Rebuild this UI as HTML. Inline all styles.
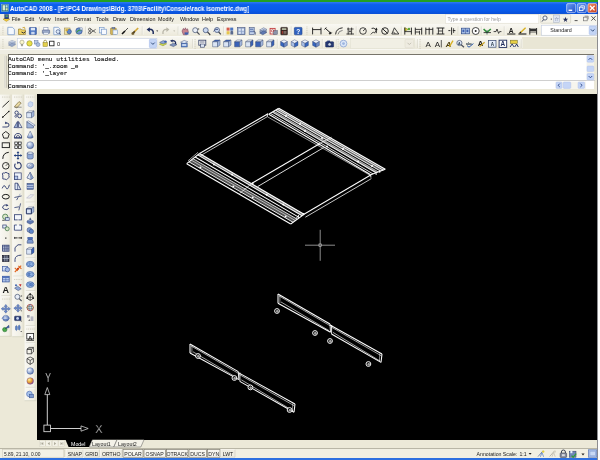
<!DOCTYPE html>
<html>
<head>
<meta charset="utf-8">
<title>AutoCAD 2008</title>
<style>
html,body{margin:0;padding:0;}
body{width:600px;height:460px;overflow:hidden;background:#fdfdfd;position:relative;font-family:"Liberation Sans",sans-serif;}
.abs{position:absolute;}
#green{left:0;top:0;width:598.2px;height:2.4px;background:#22a024;}
#win{left:0;top:2.3px;width:597.6px;height:455.5px;background:#ece9d8;}
#title{left:0;top:2px;width:597.6px;height:11.5px;background:linear-gradient(#2f7af2 0%,#0b60ee 22%,#095aea 70%,#0a4fd6 100%);}
#title .t{position:absolute;left:10px;top:1.5px;color:#fff;font-weight:bold;font-size:6.3px;line-height:9px;white-space:nowrap;transform-origin:0 0;transform:scaleX(0.973);}
#menu{left:0;top:13.5px;width:597.6px;height:10.5px;background:linear-gradient(90deg,#efede0 0%,#f0eee2 50%,#f6f5ee 100%);}
#menu span{position:absolute;top:1.6px;font-size:5.4px;line-height:7px;color:#111;white-space:nowrap;}
#tb1{left:0;top:24px;width:597.6px;height:12px;background:linear-gradient(#f9f8f3,#ece9da);border-bottom:0.7px solid #fbfaf6;}
#tb2bg{left:0;top:36.7px;width:597.6px;height:12.2px;background:#e9e6d5;}
#tb2{left:0;top:36.7px;width:522px;height:12.4px;background:linear-gradient(#f8f7f1,#ebe8d9);}
#tb3{left:0;top:48.9px;width:597.6px;height:5.2px;background:#efede2;border-top:0.8px solid #f8f7f2;box-sizing:border-box;}
#cmd{left:8px;top:54px;width:586px;height:35.2px;background:#fff;border-top:0.9px solid #77746a;border-left:0.9px solid #77746a;box-sizing:border-box;}
#cmd .l{-webkit-text-stroke:0.12px #111;position:absolute;left:-0.6px;font-family:"Liberation Mono",monospace;font-size:6.2px;line-height:6.7px;color:#111;white-space:pre;}
#draw{left:37px;top:94px;width:560px;height:346px;background:#000;}
#left{left:0;top:94px;width:37.4px;height:354px;background:#ece9d8;}
#tabs{left:37px;top:440px;width:560px;height:8.2px;background:#ece9d8;}
#status{left:0;top:448.2px;width:597.6px;height:9.6px;background:#f1efe2;border-top:0.6px solid #b9b6a6;box-sizing:border-box;}
#task{left:0;top:457.8px;width:597.4px;height:2.2px;background:#2d6fe0;}
#redge{left:597.2px;top:2.3px;width:1.1px;height:457.7px;background:#8d8d90;}

#iconsvg,#drawsvg,#title .t,#menu,#cmd .l{will-change:transform;}
#redge2{left:597.1px;top:2px;width:1.2px;height:11.5px;background:#1b3fa8;}

</style>
</head>
<body>
<div id="green" class="abs"></div>
<div id="win" class="abs"></div>
<div id="title" class="abs"><div class="t">AutoCAD 2008 - [P:\PC4 Drawings\Bldg. 3703\Facility\Console\rack isometric.dwg]</div></div>
<div id="menu" class="abs">
<span style="left:11.8px">File</span><span style="left:25px">Edit</span><span style="left:39px">View</span><span style="left:55px">Insert</span><span style="left:74px">Format</span><span style="left:96px">Tools</span><span style="left:113px">Draw</span><span style="left:130px">Dimension</span><span style="left:158px">Modify</span><span style="left:180px">Window</span><span style="left:202px">Help</span><span style="left:217px">Express</span>
</div>
<div id="tb1" class="abs"></div>
<div id="tb2bg" class="abs"></div>
<div id="tb2" class="abs"></div>
<div id="tb3" class="abs"></div>
<div id="cmd" class="abs">
<div class="l" style="top:1.9px">AutoCAD menu utilities loaded.</div>
<div class="l" style="top:8.7px">Command: '_.zoom _e</div>
<div class="l" style="top:16.2px">Command: '_layer</div>
<div class="abs" style="left:0;top:25.4px;width:586px;height:0.7px;background:#cfcfcf"></div>
<div class="l" style="top:28.5px">Command:</div>
</div>
<div id="left" class="abs"></div>
<div id="draw" class="abs"></div>
<div id="tabs" class="abs"></div>
<div id="status" class="abs"></div>
<div id="task" class="abs"></div>
<div id="redge" class="abs"></div>
<div id="redge2" class="abs"></div>

<svg id="drawsvg" class="abs" width="600" height="460" viewBox="0 0 600 460" style="left:0;top:0">
<line x1="199.5" y1="153.5" x2="268.0" y2="113.7" stroke="#fff" stroke-width="1.01" stroke-opacity="1"/>
<line x1="200.6" y1="155.6" x2="267.3" y2="116.7" stroke="#fff" stroke-width="0.9" stroke-opacity="0.85"/>
<line x1="304.0" y1="214.3" x2="370.7" y2="175.0" stroke="#fff" stroke-width="1.01" stroke-opacity="1"/>
<line x1="305.4" y1="217.2" x2="371.4" y2="178.6" stroke="#fff" stroke-width="0.9" stroke-opacity="0.85"/>
<line x1="267.3" y1="116.7" x2="370.7" y2="175.6" stroke="#fff" stroke-width="0.78" stroke-opacity="0.75"/>
<line x1="252.0" y1="183.3" x2="318.7" y2="144.2" stroke="#fff" stroke-width="1.01" stroke-opacity="1"/>
<line x1="257.6" y1="186.6" x2="323.6" y2="147.6" stroke="#fff" stroke-width="0.95" stroke-opacity="0.9"/>
<line x1="252.0" y1="183.3" x2="239.6" y2="193.4" stroke="#fff" stroke-width="0.78" stroke-opacity="0.8"/>
<line x1="318.7" y1="144.2" x2="331.6" y2="137.2" stroke="#fff" stroke-width="0.78" stroke-opacity="0.8"/>
<polygon points="199.5,153.5 304.0,214.3 302.1,215.7 197.7,154.9" fill="#fff" fill-opacity="0.5"/>
<polygon points="193.0,158.7 297.2,219.2 293.1,222.3 189.0,161.9" fill="#fff" fill-opacity="0.32"/>
<line x1="199.5" y1="153.5" x2="304.0" y2="214.3" stroke="#fff" stroke-width="1.12" stroke-opacity="1"/>
<line x1="197.7" y1="154.9" x2="302.1" y2="215.7" stroke="#fff" stroke-width="1.01" stroke-opacity="0.95"/>
<line x1="195.1" y1="157.0" x2="299.5" y2="217.6" stroke="#fff" stroke-width="1.06" stroke-opacity="1"/>
<line x1="193.0" y1="158.7" x2="297.2" y2="219.2" stroke="#fff" stroke-width="0.9" stroke-opacity="0.9"/>
<line x1="191.2" y1="160.1" x2="295.4" y2="220.6" stroke="#fff" stroke-width="0.78" stroke-opacity="0.75"/>
<line x1="189.0" y1="161.9" x2="293.1" y2="222.3" stroke="#fff" stroke-width="0.95" stroke-opacity="0.95"/>
<line x1="186.7" y1="163.7" x2="290.7" y2="224.0" stroke="#fff" stroke-width="1.12" stroke-opacity="1"/>
<line x1="199.5" y1="153.5" x2="186.7" y2="163.7" stroke="#fff" stroke-width="1.01" stroke-opacity="1"/>
<line x1="304.0" y1="214.3" x2="290.7" y2="224.0" stroke="#fff" stroke-width="1.01" stroke-opacity="1"/>
<line x1="198.0" y1="152.3" x2="188.0" y2="160.8" stroke="#fff" stroke-width="0.78" stroke-opacity="0.8"/>
<line x1="296.0" y1="218.7" x2="298.6" y2="215.2" stroke="#fff" stroke-width="0.9" stroke-opacity="1"/>
<line x1="298.6" y1="215.2" x2="298.2" y2="219.0" stroke="#fff" stroke-width="0.78" stroke-opacity="1"/>
<circle cx="214" cy="164.4" r="1.0" fill="#fff"/>
<circle cx="232" cy="174.6" r="1.0" fill="#fff"/>
<circle cx="266.7" cy="194.8" r="1.0" fill="#fff"/>
<circle cx="283.3" cy="204.6" r="1.0" fill="#fff"/>
<circle cx="200.4" cy="167.6" r="1.0" fill="#fff"/>
<circle cx="233.3" cy="186.4" r="1.0" fill="#fff"/>
<circle cx="252.7" cy="197.4" r="1.0" fill="#fff"/>
<circle cx="285.6" cy="216.4" r="1.0" fill="#fff"/>
<polygon points="272.4,112.1 376.1,172.8 378.3,171.9 273.9,111.2" fill="#fff" fill-opacity="0.5"/>
<polygon points="275.5,110.2 380.6,171.1 385.3,169.3 278.7,108.3" fill="#fff" fill-opacity="0.36"/>
<line x1="268.7" y1="114.3" x2="370.7" y2="174.8" stroke="#fff" stroke-width="1.12" stroke-opacity="1"/>
<line x1="270.3" y1="113.3" x2="373.0" y2="173.9" stroke="#fff" stroke-width="0.95" stroke-opacity="0.9"/>
<line x1="272.4" y1="112.1" x2="376.1" y2="172.8" stroke="#fff" stroke-width="1.01" stroke-opacity="0.95"/>
<line x1="273.9" y1="111.2" x2="378.3" y2="171.9" stroke="#fff" stroke-width="0.78" stroke-opacity="0.8"/>
<line x1="275.5" y1="110.2" x2="380.6" y2="171.1" stroke="#fff" stroke-width="1.01" stroke-opacity="0.95"/>
<line x1="277.3" y1="109.1" x2="383.3" y2="170.1" stroke="#fff" stroke-width="1.01" stroke-opacity="0.95"/>
<line x1="278.7" y1="108.3" x2="385.3" y2="169.3" stroke="#fff" stroke-width="1.12" stroke-opacity="1"/>
<line x1="268.7" y1="114.3" x2="278.7" y2="108.3" stroke="#fff" stroke-width="1.01" stroke-opacity="1"/>
<line x1="370.7" y1="174.8" x2="385.3" y2="169.3" stroke="#fff" stroke-width="1.01" stroke-opacity="1"/>
<line x1="267.3" y1="113.7" x2="267.3" y2="116.7" stroke="#fff" stroke-width="0.9" stroke-opacity="1"/>
<line x1="370.7" y1="175.0" x2="370.9" y2="177.6" stroke="#fff" stroke-width="0.9" stroke-opacity="1"/>
<line x1="376.0" y1="172.4" x2="376.2" y2="175.0" stroke="#fff" stroke-width="0.9" stroke-opacity="1"/>
<line x1="379.5" y1="170.6" x2="379.8" y2="173.0" stroke="#fff" stroke-width="0.78" stroke-opacity="1"/>
<circle cx="286" cy="116" r="1.0" fill="#fff"/>
<circle cx="305" cy="131" r="1.0" fill="#fff"/>
<circle cx="322" cy="138" r="1.0" fill="#fff"/>
<circle cx="343" cy="149" r="1.0" fill="#fff"/>
<circle cx="358" cy="161.5" r="1.0" fill="#fff"/>
<circle cx="372" cy="166" r="1.0" fill="#fff"/>
<circle cx="327" cy="146.5" r="1.0" fill="#fff"/>
<circle cx="300" cy="124" r="1.0" fill="#fff"/>
<circle cx="252.5" cy="183.5" r="1.1" fill="#fff" fill-opacity="0.9"/>
<circle cx="319" cy="144.4" r="1.1" fill="#fff" fill-opacity="0.9"/>
<circle cx="303.5" cy="214.2" r="1.1" fill="#fff" fill-opacity="0.9"/>
<line x1="278.0" y1="294.0" x2="330.0" y2="324.0" stroke="#fff" stroke-width="1.06" stroke-opacity="1"/>
<line x1="330.0" y1="325.0" x2="382.0" y2="354.0" stroke="#fff" stroke-width="1.06" stroke-opacity="1"/>
<line x1="279.0" y1="295.9" x2="330.0" y2="325.7" stroke="#fff" stroke-width="0.78" stroke-opacity="0.8"/>
<line x1="331.0" y1="326.9" x2="381.5" y2="355.9" stroke="#fff" stroke-width="0.78" stroke-opacity="0.8"/>
<line x1="281.0" y1="302.0" x2="329.0" y2="330.6" stroke="#fff" stroke-width="0.78" stroke-opacity="0.8"/>
<line x1="333.0" y1="332.4" x2="380.0" y2="361.0" stroke="#fff" stroke-width="0.78" stroke-opacity="0.8"/>
<line x1="278.0" y1="303.2" x2="330.5" y2="332.2" stroke="#fff" stroke-width="1.01" stroke-opacity="1"/>
<line x1="331.5" y1="334.0" x2="381.0" y2="362.4" stroke="#fff" stroke-width="1.01" stroke-opacity="1"/>
<line x1="278.0" y1="294.0" x2="278.0" y2="303.2" stroke="#fff" stroke-width="1.06" stroke-opacity="1"/>
<line x1="279.9" y1="295.5" x2="279.9" y2="303.0" stroke="#fff" stroke-width="0.67" stroke-opacity="0.8"/>
<line x1="382.0" y1="354.0" x2="381.0" y2="362.4" stroke="#fff" stroke-width="1.06" stroke-opacity="1"/>
<line x1="379.8" y1="353.4" x2="379.4" y2="361.2" stroke="#fff" stroke-width="0.67" stroke-opacity="0.8"/>
<line x1="330.0" y1="324.0" x2="330.5" y2="332.2" stroke="#fff" stroke-width="0.9" stroke-opacity="1"/>
<line x1="331.6" y1="325.0" x2="331.6" y2="334.0" stroke="#fff" stroke-width="0.9" stroke-opacity="1"/>
<line x1="190.0" y1="344.0" x2="238.3" y2="371.6" stroke="#fff" stroke-width="1.06" stroke-opacity="1"/>
<line x1="238.3" y1="372.6" x2="295.0" y2="404.0" stroke="#fff" stroke-width="1.06" stroke-opacity="1"/>
<line x1="191.0" y1="345.9" x2="238.3" y2="373.3" stroke="#fff" stroke-width="0.78" stroke-opacity="0.8"/>
<line x1="239.3" y1="374.5" x2="294.5" y2="405.9" stroke="#fff" stroke-width="0.78" stroke-opacity="0.8"/>
<line x1="193.0" y1="351.8" x2="237.3" y2="378.0" stroke="#fff" stroke-width="0.78" stroke-opacity="0.8"/>
<line x1="241.3" y1="379.8" x2="293.0" y2="410.8" stroke="#fff" stroke-width="0.78" stroke-opacity="0.8"/>
<line x1="190.0" y1="353.0" x2="238.8" y2="379.6" stroke="#fff" stroke-width="1.01" stroke-opacity="1"/>
<line x1="239.8" y1="381.4" x2="294.0" y2="412.2" stroke="#fff" stroke-width="1.01" stroke-opacity="1"/>
<line x1="190.0" y1="344.0" x2="190.0" y2="353.0" stroke="#fff" stroke-width="1.06" stroke-opacity="1"/>
<line x1="191.9" y1="345.5" x2="191.9" y2="352.8" stroke="#fff" stroke-width="0.67" stroke-opacity="0.8"/>
<line x1="295.0" y1="404.0" x2="294.0" y2="412.2" stroke="#fff" stroke-width="1.06" stroke-opacity="1"/>
<line x1="292.8" y1="403.4" x2="292.4" y2="411.0" stroke="#fff" stroke-width="0.67" stroke-opacity="0.8"/>
<line x1="238.3" y1="371.6" x2="238.8" y2="379.6" stroke="#fff" stroke-width="0.9" stroke-opacity="1"/>
<line x1="239.9" y1="372.6" x2="239.9" y2="381.4" stroke="#fff" stroke-width="0.9" stroke-opacity="1"/>
<circle cx="277" cy="311" r="2.4" fill="#000" stroke="#fff" stroke-width="0.95"/><circle cx="277.3" cy="311.3" r="1.0" fill="#888" stroke="#fff" stroke-width="0.5" stroke-opacity="0.9"/>
<circle cx="315" cy="333" r="2.4" fill="#000" stroke="#fff" stroke-width="0.95"/><circle cx="315.3" cy="333.3" r="1.0" fill="#888" stroke="#fff" stroke-width="0.5" stroke-opacity="0.9"/>
<circle cx="330" cy="341" r="2.4" fill="#000" stroke="#fff" stroke-width="0.95"/><circle cx="330.3" cy="341.3" r="1.0" fill="#888" stroke="#fff" stroke-width="0.5" stroke-opacity="0.9"/>
<circle cx="368.4" cy="364" r="2.4" fill="#000" stroke="#fff" stroke-width="0.95"/><circle cx="368.7" cy="364.3" r="1.0" fill="#888" stroke="#fff" stroke-width="0.5" stroke-opacity="0.9"/>
<circle cx="198" cy="356" r="2.4" fill="#000" stroke="#fff" stroke-width="0.95"/><circle cx="198.3" cy="356.3" r="1.0" fill="#888" stroke="#fff" stroke-width="0.5" stroke-opacity="0.9"/>
<circle cx="234.4" cy="378" r="2.4" fill="#000" stroke="#fff" stroke-width="0.95"/><circle cx="234.70000000000002" cy="378.3" r="1.0" fill="#888" stroke="#fff" stroke-width="0.5" stroke-opacity="0.9"/>
<circle cx="250.4" cy="387.4" r="2.4" fill="#000" stroke="#fff" stroke-width="0.95"/><circle cx="250.70000000000002" cy="387.7" r="1.0" fill="#888" stroke="#fff" stroke-width="0.5" stroke-opacity="0.9"/>
<circle cx="289.6" cy="410" r="2.4" fill="#000" stroke="#fff" stroke-width="0.95"/><circle cx="289.90000000000003" cy="410.3" r="1.0" fill="#888" stroke="#fff" stroke-width="0.5" stroke-opacity="0.9"/>
<line x1="305.0" y1="245.2" x2="335.0" y2="245.2" stroke="#d0d0d0" stroke-width="0.67" stroke-opacity="1"/>
<line x1="320.2" y1="229.8" x2="320.2" y2="260.8" stroke="#d0d0d0" stroke-width="0.67" stroke-opacity="1"/>
<rect x="318.9" y="243.9" width="2.6" height="2.6" fill="#666" stroke="#ccc" stroke-width="0.5"/>
<rect x="43.9" y="425.1" width="6.6" height="6.6" fill="none" stroke="#e8e8e8" stroke-width="0.8"/>
<line x1="47.3" y1="425.0" x2="47.3" y2="394.6" stroke="#e8e8e8" stroke-width="0.9" stroke-opacity="1"/>
<polygon points="47.3,387.5 44.8,394.6 49.8,394.6" fill="none" stroke="#e8e8e8" stroke-width="0.7"/>
<line x1="50.6" y1="428.5" x2="81.0" y2="428.5" stroke="#e8e8e8" stroke-width="0.9" stroke-opacity="1"/>
<polygon points="88.2,428.5 81,425.9 81,431.2" fill="none" stroke="#e8e8e8" stroke-width="0.7"/>
<text transform="translate(48.2,381.6) scale(0.72,1)" x="0" y="0" font-family="Liberation Sans, sans-serif" font-size="12" fill="#e8e8e8" text-anchor="middle" stroke="#000" stroke-width="0.3">Y</text>
<text x="98.8" y="432.8" font-family="Liberation Sans, sans-serif" font-size="11" fill="#e8e8e8" text-anchor="middle" stroke="#000" stroke-width="0.4">X</text>
</svg>
<svg id="iconsvg" class="abs" width="600" height="460" viewBox="0 0 600 460" style="left:0;top:0">
<rect x="1.6" y="4.2" width="7.0" height="7.4" fill="#2a6a7c" stroke="#9fd0d8" stroke-width="0.5" rx="0" fill-opacity="1"/>
<rect x="2.6" y="5.2" width="2.4" height="5.2" fill="#d8ecd0" rx="0" fill-opacity="1"/>
<rect x="5.6" y="5.2" width="2.0" height="2.4" fill="#bfe0e8" rx="0" fill-opacity="1"/>
<rect x="5.6" y="8.2" width="2.0" height="2.2" fill="#e8f0a8" rx="0" fill-opacity="1"/>
<defs><linearGradient id="gb" x1="0" y1="0" x2="1" y2="1"><stop offset="0" stop-color="#6c9cf4"/><stop offset="1" stop-color="#1f50c8"/></linearGradient><linearGradient id="gr" x1="0" y1="0" x2="1" y2="1"><stop offset="0" stop-color="#f0906a"/><stop offset="1" stop-color="#c63a18"/></linearGradient></defs>
<rect x="566.6" y="3.6" width="9.0" height="9.0" fill="url(#gb)" stroke="#dfe8fb" stroke-width="0.6" rx="1.4" fill-opacity="1"/>
<rect x="577.2" y="3.6" width="9.0" height="9.0" fill="url(#gb)" stroke="#dfe8fb" stroke-width="0.6" rx="1.4" fill-opacity="1"/>
<rect x="587.8" y="3.6" width="9.0" height="9.0" fill="url(#gr)" stroke="#fbe4dc" stroke-width="0.6" rx="1.4" fill-opacity="1"/>
<rect x="568.6" y="9.6" width="3.6" height="1.4" fill="#fff" rx="0" fill-opacity="1"/>
<rect x="579.4" y="7.2" width="3.6" height="3.4" fill="none" stroke="#fff" stroke-width="0.8" rx="0" fill-opacity="1"/>
<path d="M580.8,6.8 v-1 h3.6 v3.4 h-1" fill="none" stroke="#fff" stroke-width="0.8" stroke-linecap="butt" stroke-linejoin="round" opacity="1"/>
<line x1="590.0" y1="5.8" x2="594.6" y2="10.4" stroke="#fff" stroke-width="1.3" stroke-opacity="1"/>
<line x1="594.6" y1="5.8" x2="590.0" y2="10.4" stroke="#fff" stroke-width="1.3" stroke-opacity="1"/>
<path d="M3,19.2 l3.4,-1.6 l3.4,1.6 l-3.4,2.2z" fill="#f0c83c" stroke="#a07c10" stroke-width="0.4" stroke-linecap="butt" stroke-linejoin="round" opacity="1"/>
<rect x="4.8" y="14.6" width="3.8" height="4.2" fill="#2b4a8e" stroke="#15244a" stroke-width="0.4" rx="0" fill-opacity="1"/>
<rect x="5.6" y="15.4" width="2.2" height="1.4" fill="#6fb24c" rx="0" fill-opacity="1"/>
<rect x="445.4" y="14.4" width="93.4" height="8.8" fill="#fff" stroke="#dddacc" stroke-width="0.5" rx="0" fill-opacity="1"/>
<text x="447.4" y="21.0" font-family="Liberation Sans, sans-serif" font-size="5.0" font-weight="normal" font-style="normal" fill="#9a9a9a" text-anchor="start">Type a question for help</text>
<rect x="540.6" y="14.4" width="30.0" height="8.8" fill="#f4f2e8" stroke="#c9c6b6" stroke-width="0.5" rx="1" fill-opacity="1"/>
<circle cx="545.0" cy="18.0" r="2.1" fill="#f6f8fb" stroke="#3c4660" stroke-width="0.8" fill-opacity="1"/>
<line x1="543.6" y1="19.6" x2="542.0" y2="21.6" stroke="#3c4660" stroke-width="1.0" stroke-opacity="1"/>
<rect x="550.8" y="18.6" width="1.0" height="1.0" fill="#333" rx="0" fill-opacity="1"/>
<rect x="553.6" y="15.0" width="6.2" height="7.4" fill="#dfe5f0" stroke="#9aa4ba" stroke-width="0.4" rx="0" fill-opacity="1"/>
<text x="556.7" y="21.0" font-family="DejaVu Sans, sans-serif" font-size="5.5" font-weight="bold" font-style="normal" fill="#3a4a7a" text-anchor="middle">☆</text>
<text x="565.6" y="21.6" font-family="DejaVu Sans, sans-serif" font-size="7.2" font-weight="normal" font-style="normal" fill="#27305a" text-anchor="middle">★</text>
<line x1="574.6" y1="20.6" x2="577.6" y2="20.6" stroke="#444" stroke-width="0.9" stroke-opacity="1"/>
<rect x="583.4" y="17.2" width="3.8" height="3.6" fill="none" stroke="#777" stroke-width="0.7" rx="0" fill-opacity="1"/>
<line x1="584.6" y1="16.2" x2="588.2" y2="16.2" stroke="#777" stroke-width="0.8" stroke-opacity="1"/>
<line x1="588.2" y1="16.2" x2="588.2" y2="19.4" stroke="#777" stroke-width="0.7" stroke-opacity="1"/>
<line x1="591.4" y1="16.2" x2="595.6" y2="20.6" stroke="#444" stroke-width="0.9" stroke-opacity="1"/>
<line x1="595.6" y1="16.2" x2="591.4" y2="20.6" stroke="#444" stroke-width="0.9" stroke-opacity="1"/>
<rect x="2.5" y="26.5" width="0.9" height="0.9" fill="#c9c6b6" rx="0" fill-opacity="1"/><rect x="2.5" y="28.3" width="0.9" height="0.9" fill="#c9c6b6" rx="0" fill-opacity="1"/><rect x="2.5" y="30.1" width="0.9" height="0.9" fill="#c9c6b6" rx="0" fill-opacity="1"/><rect x="2.5" y="31.9" width="0.9" height="0.9" fill="#c9c6b6" rx="0" fill-opacity="1"/><rect x="2.5" y="33.7" width="0.9" height="0.9" fill="#c9c6b6" rx="0" fill-opacity="1"/>
<path d="M7.8,27.3 h4.6 l2,2 v5.4 h-6.6z" fill="#f4f8fd" stroke="#6d8fc4" stroke-width="0.7" stroke-linecap="butt" stroke-linejoin="round" opacity="1"/>
<path d="M18.5,29.0 h2.5 l0.8,0.9 h3.6 v4.6 h-6.9z" fill="#f0d264" stroke="#8a7320" stroke-width="0.6" stroke-linecap="butt" stroke-linejoin="round" opacity="1"/>
<path d="M21.5,32.0 q2.5,2.5 4,-0.5" fill="none" stroke="#333" stroke-width="1.0" stroke-linecap="butt" stroke-linejoin="round" opacity="1"/>
<path d="M22.5,27.8 l2,-0.5 l0.5,2" fill="none" stroke="#c89a20" stroke-width="0.8" stroke-linecap="butt" stroke-linejoin="round" opacity="1"/>
<rect x="29.4" y="27.5" width="7.0" height="7.0" fill="#4a74c0" stroke="#2b4a8e" stroke-width="0.6" rx="0.5" fill-opacity="1"/>
<rect x="30.8" y="27.8" width="4.2" height="2.6" fill="#dfe8f6" rx="0" fill-opacity="1"/>
<rect x="31.2" y="31.8" width="3.4" height="2.6" fill="#c9d6ee" rx="0" fill-opacity="1"/>
<line x1="39.3" y1="26.5" x2="39.3" y2="34.8" stroke="#c5c2b2" stroke-width="0.6" stroke-opacity="1"/><line x1="39.9" y1="26.5" x2="39.9" y2="34.8" stroke="#fff" stroke-width="0.6" stroke-opacity="1"/>
<rect x="43.8" y="27.6" width="4.2" height="2.6" fill="#fff" stroke="#6f7fa6" stroke-width="0.5" rx="0" fill-opacity="1"/>
<rect x="42.4" y="30.0" width="7.2" height="3.4" fill="#9aa9c8" stroke="#4d5d86" stroke-width="0.6" rx="0.6" fill-opacity="1"/>
<rect x="43.6" y="32.4" width="4.8" height="2.0" fill="#e8edf7" stroke="#6f7fa6" stroke-width="0.4" rx="0" fill-opacity="1"/>
<path d="M53.8,27.3 h4.4 l1.8,1.8 v5.6 h-6.2z" fill="#f4f8fd" stroke="#6d8fc4" stroke-width="0.7" stroke-linecap="butt" stroke-linejoin="round" opacity="1"/>
<circle cx="58.0" cy="31.6" r="1.9" fill="#dce9f8" stroke="#4a5e8c" stroke-width="0.7" fill-opacity="1"/>
<line x1="59.2" y1="33.0" x2="60.8" y2="34.8" stroke="#4a5e8c" stroke-width="1" stroke-opacity="1"/>
<rect x="64.6" y="28.0" width="5.4" height="6.2" fill="#f2e3a1" stroke="#8c7a3a" stroke-width="0.5" rx="0" fill-opacity="1"/>
<circle cx="69.2" cy="31.6" r="2.2" fill="#5f86c9" stroke="#2d4a8a" stroke-width="0.6" fill-opacity="1"/>
<rect x="65.6" y="29.2" width="2.2" height="1.8" fill="#d0a73a" rx="0" fill-opacity="1"/>
<circle cx="79.0" cy="31.0" r="3.2" fill="#6c93cf" stroke="#2d4a8a" stroke-width="0.6" fill-opacity="1"/>
<path d="M76.5,32.5 q2,-3 5,-2.5" fill="none" stroke="#3e9a4a" stroke-width="1.2" stroke-linecap="butt" stroke-linejoin="round" opacity="1"/>
<circle cx="81.2" cy="28.8" r="1.3" fill="#dfe8f6" stroke="#55668e" stroke-width="0.4" fill-opacity="1"/>
<line x1="85.6" y1="26.5" x2="85.6" y2="34.8" stroke="#c5c2b2" stroke-width="0.6" stroke-opacity="1"/><line x1="86.2" y1="26.5" x2="86.2" y2="34.8" stroke="#fff" stroke-width="0.6" stroke-opacity="1"/>
<line x1="90.6" y1="29.0" x2="95.6" y2="32.6" stroke="#444" stroke-width="0.8" stroke-opacity="1"/>
<line x1="90.6" y1="32.8" x2="95.6" y2="29.4" stroke="#444" stroke-width="0.8" stroke-opacity="1"/>
<circle cx="89.7" cy="29.4" r="1.2" fill="none" stroke="#333" stroke-width="0.7" fill-opacity="1"/>
<circle cx="89.7" cy="32.6" r="1.2" fill="none" stroke="#333" stroke-width="0.7" fill-opacity="1"/>
<rect x="99.5" y="27.5" width="4.6" height="5.4" fill="#eef4fc" stroke="#6d8fc4" stroke-width="0.6" rx="0" fill-opacity="1"/>
<rect x="101.6" y="29.2" width="4.8" height="5.4" fill="#f6f9fe" stroke="#6d8fc4" stroke-width="0.6" rx="0" fill-opacity="1"/>
<rect x="110.6" y="28.0" width="5.6" height="6.4" fill="#d9b95c" stroke="#8a6e1e" stroke-width="0.5" rx="0.6" fill-opacity="1"/>
<rect x="112.0" y="27.3" width="2.8" height="1.6" fill="#8896b5" stroke="#4d5d86" stroke-width="0.4" rx="0" fill-opacity="1"/>
<rect x="113.0" y="30.0" width="4.4" height="4.6" fill="#eef4fc" stroke="#6d8fc4" stroke-width="0.5" rx="0" fill-opacity="1"/>
<line x1="122.0" y1="34.0" x2="125.0" y2="31.0" stroke="#111" stroke-width="1.6" stroke-opacity="1"/>
<line x1="125.0" y1="31.0" x2="128.0" y2="28.0" stroke="#555" stroke-width="1.0" stroke-opacity="1"/>
<line x1="132.2" y1="34.0" x2="135.0" y2="31.2" stroke="#4a3a1a" stroke-width="1.8" stroke-opacity="1"/>
<line x1="134.8" y1="31.4" x2="138.2" y2="28.0" stroke="#d3a93c" stroke-width="1.6" stroke-opacity="1"/>
<rect x="131.6" y="32.6" width="2.6" height="2.0" fill="#6e5a2a" rx="0" fill-opacity="1"/>
<line x1="142.3" y1="26.5" x2="142.3" y2="34.8" stroke="#c5c2b2" stroke-width="0.6" stroke-opacity="1"/><line x1="142.9" y1="26.5" x2="142.9" y2="34.8" stroke="#fff" stroke-width="0.6" stroke-opacity="1"/>
<path d="M153.2,34.0 q0.8,-5 -4.4,-4.6" fill="none" stroke="#1c2a5c" stroke-width="1.5" stroke-linecap="butt" stroke-linejoin="round" opacity="1"/>
<path d="M146.6,29.6 l3.2,-2.4 v4.8z" fill="#1c2a5c" opacity="1"/>
<path d="M156.2,30.6 h2 l-1,1.2z" fill="#222" opacity="1"/>
<path d="M163,34.0 q-0.8,-5 4.2,-4.6" fill="none" stroke="#b9b6a8" stroke-width="1.3" stroke-linecap="butt" stroke-linejoin="round" opacity="1"/>
<path d="M169.4,29.6 l-3,-2.3 v4.6z" fill="#b9b6a8" opacity="1"/>
<path d="M173.2,30.6 h2 l-1,1.2z" fill="#b5b2a4" opacity="1"/>
<line x1="178.2" y1="26.5" x2="178.2" y2="34.8" stroke="#c5c2b2" stroke-width="0.6" stroke-opacity="1"/><line x1="178.8" y1="26.5" x2="178.8" y2="34.8" stroke="#fff" stroke-width="0.6" stroke-opacity="1"/>
<path d="M182,31.0 l1.4,-2.6 l1,1.4 l1,-2 l1,2 l1.2,-1 l0.8,3.4 l-1.6,2.6 h-3.4z" fill="#c9858e" stroke="#6a3550" stroke-width="0.5" stroke-linecap="butt" stroke-linejoin="round" opacity="1"/>
<rect x="184.6" y="32.4" width="3.8" height="2.2" fill="#3e5fae" rx="0" fill-opacity="1"/>
<circle cx="195.2" cy="30.2" r="2.5" fill="#e9eef6" stroke="#56627e" stroke-width="0.8" fill-opacity="1"/>
<line x1="197.0" y1="32.0" x2="199.6" y2="34.6" stroke="#4c4f5a" stroke-width="1.2" stroke-opacity="1"/>
<text x="197.2" y="30.4" font-family="Liberation Sans, sans-serif" font-size="4" font-weight="normal" font-style="normal" fill="#333" text-anchor="start">±</text>
<circle cx="205.7" cy="30.2" r="2.5" fill="#cbd9f0" stroke="#4c5d84" stroke-width="0.8" fill-opacity="1"/>
<line x1="207.5" y1="32.0" x2="210.1" y2="34.6" stroke="#3c3f4a" stroke-width="1.2" stroke-opacity="1"/>
<path d="M209.1,34.6 h1.6 l-0.8,1z" fill="#222" opacity="1"/>
<circle cx="217.0" cy="30.0" r="2.5" fill="#cbd9f0" stroke="#4c5d84" stroke-width="0.8" fill-opacity="1"/>
<line x1="218.6" y1="31.8" x2="220.8" y2="34.4" stroke="#3c3f4a" stroke-width="1.2" stroke-opacity="1"/>
<path d="M213.4,31.4 q2,-3 4.6,-2" fill="none" stroke="#3a4a7a" stroke-width="0.9" stroke-linecap="butt" stroke-linejoin="round" opacity="1"/>
<line x1="223.6" y1="26.5" x2="223.6" y2="34.8" stroke="#c5c2b2" stroke-width="0.6" stroke-opacity="1"/><line x1="224.2" y1="26.5" x2="224.2" y2="34.8" stroke="#fff" stroke-width="0.6" stroke-opacity="1"/>
<rect x="226.6" y="27.6" width="3.0" height="3.0" fill="#d65a4a" rx="0" fill-opacity="1"/>
<rect x="230.2" y="27.6" width="3.0" height="3.0" fill="#4a74c0" rx="0" fill-opacity="1"/>
<rect x="226.6" y="31.2" width="3.0" height="3.2" fill="#e7c64e" rx="0" fill-opacity="1"/>
<path d="M230.4,34.6 v-3 l1.4,-1 l1.4,1 v3z" fill="#5a6a8e" opacity="1"/>
<rect x="237.6" y="27.6" width="7.4" height="7.0" fill="#8ea1c6" stroke="#44557e" stroke-width="0.6" rx="0" fill-opacity="1"/>
<rect x="238.6" y="28.6" width="2.2" height="2.2" fill="#dfe8f6" rx="0" fill-opacity="1"/>
<rect x="241.8" y="28.6" width="2.2" height="2.2" fill="#dfe8f6" rx="0" fill-opacity="1"/>
<rect x="238.6" y="31.6" width="2.2" height="2.2" fill="#dfe8f6" rx="0" fill-opacity="1"/>
<rect x="241.8" y="31.6" width="2.2" height="2.2" fill="#c3d2ec" rx="0" fill-opacity="1"/>
<rect x="249.2" y="27.6" width="5.0" height="7.0" fill="#c3d2ec" stroke="#44557e" stroke-width="0.6" rx="0" fill-opacity="1"/>
<rect x="250.0" y="28.6" width="3.4" height="1.6" fill="#6f86b8" rx="0" fill-opacity="1"/>
<rect x="250.0" y="31.0" width="3.4" height="1.2" fill="#6f86b8" rx="0" fill-opacity="1"/>
<path d="M253,31.0 q3,0 2.4,3.6" fill="none" stroke="#44557e" stroke-width="0.8" stroke-linecap="butt" stroke-linejoin="round" opacity="1"/>
<path d="M259.6,30.0 l4,-2.2 l3.2,1.6 l-4,2.4z" fill="#dfe8f6" stroke="#44557e" stroke-width="0.5" stroke-linecap="butt" stroke-linejoin="round" opacity="1"/>
<path d="M259.6,31.6 l4,-2.2 l3.2,1.6 l-4,2.4z" fill="#9fb3d8" stroke="#44557e" stroke-width="0.5" stroke-linecap="butt" stroke-linejoin="round" opacity="1"/>
<path d="M259.6,33.0 l4,-2.2 l3.2,1.6 l-4,2.4z" fill="#5f79b2" stroke="#34456e" stroke-width="0.5" stroke-linecap="butt" stroke-linejoin="round" opacity="1"/>
<rect x="270.1" y="28.4" width="5.0" height="5.6" fill="#f3f3f3" stroke="#c23c3c" stroke-width="0.9" rx="0" fill-opacity="1"/>
<rect x="273.5" y="30.6" width="3.8" height="3.8" fill="#8a93a8" stroke="#4d5670" stroke-width="0.5" rx="0" fill-opacity="1"/>
<circle cx="272.5" cy="30.8" r="1.2" fill="none" stroke="#c23c3c" stroke-width="0.7" fill-opacity="1"/>
<rect x="280.8" y="27.4" width="6.6" height="7.4" fill="#3c2620" stroke="#140c0a" stroke-width="0.5" rx="0.5" fill-opacity="1"/>
<rect x="281.8" y="28.2" width="4.6" height="1.8" fill="#b4b9a2" rx="0" fill-opacity="1"/>
<rect x="281.8" y="31.0" width="1.2" height="2.8" fill="#a03a30" rx="0" fill-opacity="1"/>
<rect x="283.6" y="31.0" width="1.2" height="2.8" fill="#8b7a70" rx="0" fill-opacity="1"/>
<rect x="285.2" y="31.0" width="1.2" height="2.8" fill="#8b7a70" rx="0" fill-opacity="1"/>
<line x1="291.3" y1="26.5" x2="291.3" y2="34.8" stroke="#c5c2b2" stroke-width="0.6" stroke-opacity="1"/><line x1="291.9" y1="26.5" x2="291.9" y2="34.8" stroke="#fff" stroke-width="0.6" stroke-opacity="1"/>
<rect x="294.4" y="27.4" width="7.6" height="7.4" fill="#2f62c0" stroke="#1c3f8c" stroke-width="0.6" rx="0.8" fill-opacity="1"/>
<text x="298.2" y="33.6" font-family="Liberation Sans, sans-serif" font-size="6.6" font-weight="bold" font-style="normal" fill="#fff" text-anchor="middle">?</text>
<rect x="306.5" y="26.5" width="0.9" height="0.9" fill="#c9c6b6" rx="0" fill-opacity="1"/><rect x="306.5" y="28.3" width="0.9" height="0.9" fill="#c9c6b6" rx="0" fill-opacity="1"/><rect x="306.5" y="30.1" width="0.9" height="0.9" fill="#c9c6b6" rx="0" fill-opacity="1"/><rect x="306.5" y="31.9" width="0.9" height="0.9" fill="#c9c6b6" rx="0" fill-opacity="1"/><rect x="306.5" y="33.7" width="0.9" height="0.9" fill="#c9c6b6" rx="0" fill-opacity="1"/>
<line x1="312.6" y1="27.6" x2="312.6" y2="34.4" stroke="#1a1a1a" stroke-width="0.9" stroke-opacity="1"/>
<line x1="321.0" y1="27.6" x2="321.0" y2="34.4" stroke="#1a1a1a" stroke-width="0.9" stroke-opacity="1"/>
<line x1="312.6" y1="29.6" x2="321.0" y2="29.6" stroke="#1a1a1a" stroke-width="0.9" stroke-opacity="1"/>
<line x1="325.0" y1="28.0" x2="331.0" y2="33.4" stroke="#1a1a1a" stroke-width="1.0" stroke-opacity="1"/>
<line x1="324.4" y1="29.6" x2="326.4" y2="27.4" stroke="#1a1a1a" stroke-width="0.8" stroke-opacity="1"/>
<line x1="329.8" y1="34.6" x2="331.8" y2="32.4" stroke="#1a1a1a" stroke-width="0.8" stroke-opacity="1"/>
<path d="M328.6,34.0 l3,-0.6 l-1.6,-2z" fill="#1a1a1a" opacity="1"/>
<path d="M335.6,34.4 q0.4,-6 7,-6.6" fill="none" stroke="#1a1a1a" stroke-width="0.9" stroke-linecap="butt" stroke-linejoin="round" opacity="1"/>
<path d="M338,34.4 q0.4,-3.6 4.6,-4" fill="none" stroke="#666" stroke-width="0.8" stroke-linecap="butt" stroke-linejoin="round" opacity="1"/>
<line x1="347.0" y1="29.0" x2="353.6" y2="29.0" stroke="#1a1a1a" stroke-width="0.7" stroke-opacity="1"/>
<line x1="348.2" y1="27.6" x2="348.2" y2="34.4" stroke="#1a1a1a" stroke-width="0.8" stroke-opacity="1"/>
<line x1="351.6" y1="27.6" x2="351.6" y2="34.4" stroke="#1a1a1a" stroke-width="0.8" stroke-opacity="1"/>
<line x1="346.4" y1="34.0" x2="354.0" y2="34.0" stroke="#1a1a1a" stroke-width="0.8" stroke-opacity="1"/>
<rect x="349.0" y="30.6" width="2.0" height="1.6" fill="#555" rx="0" fill-opacity="1"/>
<line x1="356.3" y1="26.5" x2="356.3" y2="34.8" stroke="#c5c2b2" stroke-width="0.6" stroke-opacity="1"/><line x1="356.9" y1="26.5" x2="356.9" y2="34.8" stroke="#fff" stroke-width="0.6" stroke-opacity="1"/>
<circle cx="363.0" cy="31.0" r="3.3" fill="none" stroke="#1a1a1a" stroke-width="0.8" fill-opacity="1"/>
<line x1="363.0" y1="31.0" x2="365.4" y2="28.8" stroke="#1a1a1a" stroke-width="0.8" stroke-opacity="1"/>
<path d="M371.6,28.4 a3.6,3.6 0 0 1 4.6,4.8" fill="none" stroke="#1a1a1a" stroke-width="0.9" stroke-linecap="butt" stroke-linejoin="round" opacity="1"/>
<path d="M370.8,34.4 l2.4,-2.4 l1.2,1 l2.4,-3.4" fill="none" stroke="#1a1a1a" stroke-width="0.8" stroke-linecap="butt" stroke-linejoin="round" opacity="1"/>
<path d="M376.8,27.6 l0.6,2.6 l-2.4,-0.8z" fill="#1a1a1a" opacity="1"/>
<circle cx="385.0" cy="31.0" r="3.3" fill="none" stroke="#1a1a1a" stroke-width="0.9" fill-opacity="1"/>
<line x1="382.6" y1="28.8" x2="387.4" y2="33.2" stroke="#1a1a1a" stroke-width="1.0" stroke-opacity="1"/>
<path d="M391.8,34.0 h7 l-4.4,-6.2z" fill="none" stroke="#1a1a1a" stroke-width="0.8" stroke-linecap="butt" stroke-linejoin="round" opacity="1"/>
<path d="M393.2,32.0 q1.6,0.4 2,2" fill="none" stroke="#1a1a1a" stroke-width="0.7" stroke-linecap="butt" stroke-linejoin="round" opacity="1"/>
<line x1="401.4" y1="26.5" x2="401.4" y2="34.8" stroke="#c5c2b2" stroke-width="0.6" stroke-opacity="1"/><line x1="402.0" y1="26.5" x2="402.0" y2="34.8" stroke="#fff" stroke-width="0.6" stroke-opacity="1"/>
<path d="M404.8,27.6 l3.4,1.8 l-3.4,1.8z" fill="#e6d23c" stroke="#6f7a20" stroke-width="0.5" stroke-linecap="butt" stroke-linejoin="round" opacity="1"/>
<line x1="404.8" y1="27.6" x2="404.8" y2="34.6" stroke="#1a1a1a" stroke-width="0.9" stroke-opacity="1"/>
<line x1="411.4" y1="27.6" x2="411.4" y2="34.6" stroke="#1a1a1a" stroke-width="0.9" stroke-opacity="1"/>
<line x1="404.8" y1="31.6" x2="411.4" y2="31.6" stroke="#1a1a1a" stroke-width="0.8" stroke-opacity="1"/>
<circle cx="409.0" cy="29.0" r="1.2" fill="#58a63c" fill-opacity="1"/>
<line x1="415.3" y1="27.6" x2="415.3" y2="34.6" stroke="#1a1a1a" stroke-width="0.9" stroke-opacity="1"/>
<line x1="421.7" y1="27.6" x2="421.7" y2="34.6" stroke="#1a1a1a" stroke-width="0.9" stroke-opacity="1"/>
<line x1="415.3" y1="29.4" x2="421.7" y2="29.4" stroke="#1a1a1a" stroke-width="0.8" stroke-opacity="1"/>
<line x1="415.3" y1="32.0" x2="419.5" y2="32.0" stroke="#1a1a1a" stroke-width="0.8" stroke-opacity="1"/>
<line x1="419.5" y1="30.8" x2="419.5" y2="34.6" stroke="#1a1a1a" stroke-width="0.8" stroke-opacity="1"/>
<line x1="425.8" y1="27.6" x2="425.8" y2="34.6" stroke="#1a1a1a" stroke-width="0.9" stroke-opacity="1"/>
<line x1="429.2" y1="27.6" x2="429.2" y2="34.6" stroke="#1a1a1a" stroke-width="0.9" stroke-opacity="1"/>
<line x1="432.8" y1="27.6" x2="432.8" y2="34.6" stroke="#1a1a1a" stroke-width="0.9" stroke-opacity="1"/>
<line x1="425.8" y1="29.4" x2="432.8" y2="29.4" stroke="#1a1a1a" stroke-width="0.8" stroke-opacity="1"/>
<line x1="436.6" y1="28.0" x2="444.4" y2="28.0" stroke="#1a1a1a" stroke-width="0.9" stroke-opacity="1"/>
<line x1="436.6" y1="34.0" x2="444.4" y2="34.0" stroke="#1a1a1a" stroke-width="0.9" stroke-opacity="1"/>
<line x1="438.4" y1="28.0" x2="438.4" y2="34.0" stroke="#1a1a1a" stroke-width="0.8" stroke-opacity="1"/>
<line x1="442.6" y1="28.0" x2="442.6" y2="34.0" stroke="#1a1a1a" stroke-width="0.8" stroke-opacity="1"/>
<line x1="438.4" y1="31.0" x2="442.6" y2="31.0" stroke="#1a1a1a" stroke-width="0.8" stroke-opacity="1"/>
<line x1="451.6" y1="27.4" x2="451.6" y2="34.8" stroke="#1a1a1a" stroke-width="0.9" stroke-opacity="1"/>
<line x1="448.4" y1="30.6" x2="450.4" y2="30.6" stroke="#1a1a1a" stroke-width="0.9" stroke-opacity="1"/>
<line x1="452.8" y1="30.6" x2="455.4" y2="30.6" stroke="#1a1a1a" stroke-width="0.9" stroke-opacity="1"/>
<line x1="453.6" y1="28.2" x2="453.6" y2="33.0" stroke="#1a1a1a" stroke-width="0.7" stroke-opacity="1"/>
<line x1="458.2" y1="26.5" x2="458.2" y2="34.8" stroke="#c5c2b2" stroke-width="0.6" stroke-opacity="1"/><line x1="458.8" y1="26.5" x2="458.8" y2="34.8" stroke="#fff" stroke-width="0.6" stroke-opacity="1"/>
<rect x="461.4" y="28.2" width="8.0" height="5.6" fill="#b8cdee" stroke="#2d4a8a" stroke-width="0.7" rx="0" fill-opacity="1"/>
<line x1="465.4" y1="28.2" x2="465.4" y2="33.8" stroke="#2d4a8a" stroke-width="0.6" stroke-opacity="1"/>
<rect x="462.4" y="29.6" width="2.0" height="2.6" fill="#3f62ae" rx="0" fill-opacity="1"/>
<rect x="466.4" y="29.6" width="2.0" height="2.6" fill="#3f62ae" rx="0" fill-opacity="1"/>
<circle cx="475.7" cy="31.0" r="3.5" fill="#fff" stroke="#1a1a1a" stroke-width="0.8" fill-opacity="1"/>
<circle cx="475.7" cy="31.0" r="1.0" fill="#222" fill-opacity="1"/>
<line x1="481.4" y1="26.5" x2="481.4" y2="34.8" stroke="#c5c2b2" stroke-width="0.6" stroke-opacity="1"/><line x1="482.0" y1="26.5" x2="482.0" y2="34.8" stroke="#fff" stroke-width="0.6" stroke-opacity="1"/>
<path d="M483.6,29.0 l3.4,3.4 l3.8,-3.4" fill="none" stroke="#2f8f3a" stroke-width="1.5" stroke-linecap="butt" stroke-linejoin="round" opacity="1"/>
<line x1="483.6" y1="32.6" x2="491.0" y2="32.6" stroke="#1a1a1a" stroke-width="0.8" stroke-opacity="1"/>
<line x1="487.0" y1="30.0" x2="487.0" y2="34.6" stroke="#355" stroke-width="0.7" stroke-opacity="1"/>
<path d="M493.6,31.6 h2.4 l1,-2.6 l1.6,4.4 l1,-1.8 h1.8" fill="none" stroke="#1a1a1a" stroke-width="0.8" stroke-linecap="butt" stroke-linejoin="round" opacity="1"/>
<line x1="504.3" y1="26.5" x2="504.3" y2="34.8" stroke="#c5c2b2" stroke-width="0.6" stroke-opacity="1"/><line x1="504.9" y1="26.5" x2="504.9" y2="34.8" stroke="#fff" stroke-width="0.6" stroke-opacity="1"/>
<text x="511.2" y="32.6" font-family="Liberation Sans, sans-serif" font-size="6.6" font-weight="bold" font-style="normal" fill="#1a1a1a" text-anchor="middle">A</text>
<line x1="507.2" y1="34.0" x2="515.4" y2="34.0" stroke="#1a1a1a" stroke-width="1.0" stroke-opacity="1"/>
<line x1="518.4" y1="34.0" x2="526.4" y2="34.0" stroke="#1a1a1a" stroke-width="1.1" stroke-opacity="1"/>
<line x1="520.0" y1="33.0" x2="525.6" y2="27.8" stroke="#d8b020" stroke-width="1.4" stroke-opacity="1"/>
<line x1="519.6" y1="33.4" x2="521.0" y2="32.0" stroke="#1a1a1a" stroke-width="1.2" stroke-opacity="1"/>
<line x1="529.8" y1="28.0" x2="529.8" y2="34.6" stroke="#1a1a1a" stroke-width="0.9" stroke-opacity="1"/>
<line x1="536.6" y1="28.0" x2="536.6" y2="34.6" stroke="#1a1a1a" stroke-width="0.9" stroke-opacity="1"/>
<rect x="529.8" y="28.6" width="6.8" height="2.4" fill="#333" rx="0" fill-opacity="1"/>
<line x1="529.8" y1="32.0" x2="536.6" y2="32.0" stroke="#1a1a1a" stroke-width="0.7" stroke-opacity="1"/>
<rect x="541.6" y="25.2" width="55.2" height="10.0" fill="#fff" stroke="#b9c6de" stroke-width="0.5" rx="0" fill-opacity="1"/>
<text x="550.3" y="32.2" font-family="Liberation Sans, sans-serif" font-size="5.3" font-weight="normal" font-style="normal" fill="#222" text-anchor="start">Standard</text>
<rect x="589.2" y="26.0" width="7.0" height="8.6" fill="#c3d4f5" stroke="#9db4e6" stroke-width="0.5" rx="1" fill-opacity="1"/>
<path d="M590.9,29.4 l1.8,1.8 l1.8,-1.8" fill="none" stroke="#35507f" stroke-width="1.0" stroke-linecap="butt" stroke-linejoin="round" opacity="1"/>
<rect x="2.5" y="39.0" width="0.9" height="0.9" fill="#c9c6b6" rx="0" fill-opacity="1"/><rect x="2.5" y="40.8" width="0.9" height="0.9" fill="#c9c6b6" rx="0" fill-opacity="1"/><rect x="2.5" y="42.6" width="0.9" height="0.9" fill="#c9c6b6" rx="0" fill-opacity="1"/><rect x="2.5" y="44.4" width="0.9" height="0.9" fill="#c9c6b6" rx="0" fill-opacity="1"/><rect x="2.5" y="46.2" width="0.9" height="0.9" fill="#c9c6b6" rx="0" fill-opacity="1"/><rect x="2.5" y="48.0" width="0.9" height="0.9" fill="#c9c6b6" rx="0" fill-opacity="1"/>
<path d="M8.4,42.2 l3.6,-1.8 l3.6,1.4 l-3.6,2z" fill="#e3e9f4" stroke="#7f8fae" stroke-width="0.5" stroke-linecap="butt" stroke-linejoin="round" opacity="1"/>
<path d="M8.4,43.6 l3.6,-1.8 l3.6,1.4 l-3.6,2z" fill="#b9c6de" stroke="#7f8fae" stroke-width="0.5" stroke-linecap="butt" stroke-linejoin="round" opacity="1"/>
<path d="M8.4,45.0 l3.6,-1.8 l3.6,1.4 l-3.6,2z" fill="#94a6c8" stroke="#66789e" stroke-width="0.5" stroke-linecap="butt" stroke-linejoin="round" opacity="1"/>
<rect x="17.3" y="38.4" width="139.6" height="10.0" fill="#fff" stroke="#b9c6de" stroke-width="0.5" rx="0" fill-opacity="1"/>
<circle cx="22.0" cy="42.2" r="2.1" fill="#fbf7cf" stroke="#8a8a6a" stroke-width="0.5" fill-opacity="1"/>
<rect x="21.1" y="44.2" width="1.8" height="1.8" fill="#bdbdad" stroke="#77776a" stroke-width="0.3" rx="0" fill-opacity="1"/>
<circle cx="29.5" cy="43.4" r="2.7" fill="#e9e04a" stroke="#8c8a2c" stroke-width="0.6" fill-opacity="1"/>
<rect x="34.4" y="40.6" width="3.6" height="3.4" fill="#b9c9e6" stroke="#62779f" stroke-width="0.5" rx="0" fill-opacity="1"/>
<circle cx="38.0" cy="44.6" r="2.0" fill="#a9bde0" stroke="#62779f" stroke-width="0.5" fill-opacity="1"/>
<rect x="43.0" y="42.6" width="4.4" height="3.8" fill="#e4d04c" stroke="#8c7c20" stroke-width="0.5" rx="0" fill-opacity="1"/>
<path d="M43.8,42.6 v-1 a1.4,1.4 0 0 1 2.8,0 v1" fill="none" stroke="#8c7c20" stroke-width="0.7" stroke-linecap="butt" stroke-linejoin="round" opacity="1"/>
<rect x="49.6" y="41.2" width="4.4" height="4.6" fill="#fff" stroke="#111" stroke-width="0.8" rx="0" fill-opacity="1"/>
<text x="57.0" y="46.0" font-family="Liberation Sans, sans-serif" font-size="5.6" font-weight="normal" font-style="normal" fill="#111" text-anchor="start">0</text>
<rect x="149.4" y="39.2" width="7.0" height="8.6" fill="#c3d4f5" stroke="#9db4e6" stroke-width="0.5" rx="1" fill-opacity="1"/>
<path d="M151.1,42.6 l1.8,1.8 l1.8,-1.8" fill="none" stroke="#35507f" stroke-width="1.0" stroke-linecap="butt" stroke-linejoin="round" opacity="1"/>
<path d="M159.4,44.2 l3.6,-1.8 l3.6,1.4 l-3.6,2z" fill="#d9e24a" stroke="#7c8a20" stroke-width="0.5" stroke-linecap="butt" stroke-linejoin="round" opacity="1"/>
<path d="M159.6,42.4 l3.6,-1.8 l3.6,1.4 l-3.6,2z" fill="#8fa6d6" stroke="#44557e" stroke-width="0.5" stroke-linecap="butt" stroke-linejoin="round" opacity="1"/>
<circle cx="165.4" cy="41.6" r="1.2" fill="#3f62ae" fill-opacity="1"/>
<path d="M169.8,45.0 l3.6,-1.8 l3.6,1.4 l-3.6,2z" fill="#7f93bd" stroke="#34456e" stroke-width="0.5" stroke-linecap="butt" stroke-linejoin="round" opacity="1"/>
<path d="M175.6,44.0 q0.4,-3.6 -3.4,-3.4" fill="none" stroke="#1c2a5c" stroke-width="1.3" stroke-linecap="butt" stroke-linejoin="round" opacity="1"/>
<path d="M170,40.800000000000004 l2.6,-1.4 v3z" fill="#1c2a5c" opacity="1"/>
<path d="M180.6,42.2 l3.6,-1.8 l3.6,1.4 l-3.6,2z" fill="#dfe8f6" stroke="#44557e" stroke-width="0.5" stroke-linecap="butt" stroke-linejoin="round" opacity="1"/>
<rect x="181.2" y="43.2" width="6.0" height="3.8" fill="#5f86c9" stroke="#2d4a8a" stroke-width="0.5" rx="0" fill-opacity="1"/>
<rect x="182.2" y="44.2" width="4.0" height="1.6" fill="#dfe8f6" rx="0" fill-opacity="1"/>
<line x1="192.6" y1="39.0" x2="192.6" y2="48.0" stroke="#c5c2b2" stroke-width="0.6" stroke-opacity="1"/><line x1="193.2" y1="39.0" x2="193.2" y2="48.0" stroke="#fff" stroke-width="0.6" stroke-opacity="1"/>
<rect x="194.6" y="39.0" width="0.9" height="0.9" fill="#c9c6b6" rx="0" fill-opacity="1"/><rect x="194.6" y="40.8" width="0.9" height="0.9" fill="#c9c6b6" rx="0" fill-opacity="1"/><rect x="194.6" y="42.6" width="0.9" height="0.9" fill="#c9c6b6" rx="0" fill-opacity="1"/><rect x="194.6" y="44.4" width="0.9" height="0.9" fill="#c9c6b6" rx="0" fill-opacity="1"/><rect x="194.6" y="46.2" width="0.9" height="0.9" fill="#c9c6b6" rx="0" fill-opacity="1"/><rect x="194.6" y="48.0" width="0.9" height="0.9" fill="#c9c6b6" rx="0" fill-opacity="1"/>
<rect x="198.8" y="40.2" width="7.0" height="5.0" fill="#fff" stroke="#2c3860" stroke-width="0.8" rx="0" fill-opacity="1"/>
<rect x="200.4" y="44.0" width="4.0" height="3.2" fill="#dfe8f6" stroke="#2c3860" stroke-width="0.6" rx="0" fill-opacity="1"/>
<line x1="200.0" y1="42.0" x2="204.6" y2="42.0" stroke="#2c3860" stroke-width="0.7" stroke-opacity="1"/>
<path d="M212.6,41.8 l2.4,-1.8 h5 l-2.4,1.8z" fill="#3a62b8" stroke="#34456e" stroke-width="0.45" stroke-linecap="butt" stroke-linejoin="round" opacity="1"/><path d="M212.6,41.8 h5 v5 h-5z" fill="#dbe5f5" stroke="#34456e" stroke-width="0.45" stroke-linecap="butt" stroke-linejoin="round" opacity="1"/><path d="M217.6,41.8 l2.4,-1.8 v5 l-2.4,1.8z" fill="#a9bde2" stroke="#34456e" stroke-width="0.45" stroke-linecap="butt" stroke-linejoin="round" opacity="1"/>
<path d="M223.6,41.8 l2.4,-1.8 h5 l-2.4,1.8z" fill="#3a62b8" stroke="#34456e" stroke-width="0.45" stroke-linecap="butt" stroke-linejoin="round" opacity="1"/><path d="M223.6,41.8 h5 v5 h-5z" fill="#dbe5f5" stroke="#34456e" stroke-width="0.45" stroke-linecap="butt" stroke-linejoin="round" opacity="1"/><path d="M228.6,41.8 l2.4,-1.8 v5 l-2.4,1.8z" fill="#a9bde2" stroke="#34456e" stroke-width="0.45" stroke-linecap="butt" stroke-linejoin="round" opacity="1"/>
<path d="M234.6,41.8 l2.4,-1.8 h5 l-2.4,1.8z" fill="#f4f7fc" stroke="#34456e" stroke-width="0.45" stroke-linecap="butt" stroke-linejoin="round" opacity="1"/><path d="M234.6,41.8 h5 v5 h-5z" fill="#3a62b8" stroke="#34456e" stroke-width="0.45" stroke-linecap="butt" stroke-linejoin="round" opacity="1"/><path d="M239.6,41.8 l2.4,-1.8 v5 l-2.4,1.8z" fill="#a9bde2" stroke="#34456e" stroke-width="0.45" stroke-linecap="butt" stroke-linejoin="round" opacity="1"/>
<path d="M245.6,41.8 l2.4,-1.8 h5 l-2.4,1.8z" fill="#f4f7fc" stroke="#34456e" stroke-width="0.45" stroke-linecap="butt" stroke-linejoin="round" opacity="1"/><path d="M245.6,41.8 h5 v5 h-5z" fill="#dbe5f5" stroke="#34456e" stroke-width="0.45" stroke-linecap="butt" stroke-linejoin="round" opacity="1"/><path d="M250.6,41.8 l2.4,-1.8 v5 l-2.4,1.8z" fill="#3a62b8" stroke="#34456e" stroke-width="0.45" stroke-linecap="butt" stroke-linejoin="round" opacity="1"/>
<path d="M255.6,41.8 l2.4,-1.8 h5 l-2.4,1.8z" fill="#f4f7fc" stroke="#34456e" stroke-width="0.45" stroke-linecap="butt" stroke-linejoin="round" opacity="1"/><path d="M255.6,41.8 h5 v5 h-5z" fill="#3a62b8" stroke="#34456e" stroke-width="0.45" stroke-linecap="butt" stroke-linejoin="round" opacity="1"/><path d="M260.6,41.8 l2.4,-1.8 v5 l-2.4,1.8z" fill="#a9bde2" stroke="#34456e" stroke-width="0.45" stroke-linecap="butt" stroke-linejoin="round" opacity="1"/>
<path d="M266.6,41.8 l2.4,-1.8 h5 l-2.4,1.8z" fill="#f4f7fc" stroke="#34456e" stroke-width="0.45" stroke-linecap="butt" stroke-linejoin="round" opacity="1"/><path d="M266.6,41.8 h5 v5 h-5z" fill="#dbe5f5" stroke="#34456e" stroke-width="0.45" stroke-linecap="butt" stroke-linejoin="round" opacity="1"/><path d="M271.6,41.8 l2.4,-1.8 v5 l-2.4,1.8z" fill="#3a62b8" stroke="#34456e" stroke-width="0.45" stroke-linecap="butt" stroke-linejoin="round" opacity="1"/>
<line x1="277.4" y1="39.0" x2="277.4" y2="48.0" stroke="#c5c2b2" stroke-width="0.6" stroke-opacity="1"/><line x1="278.0" y1="39.0" x2="278.0" y2="48.0" stroke="#fff" stroke-width="0.6" stroke-opacity="1"/>
<path d="M284,39.8 l3.4,1.8 l-3.4,1.8 l-3.4,-1.8z" fill="#eef3fb" stroke="#34456e" stroke-width="0.4" stroke-linecap="butt" stroke-linejoin="round" opacity="1"/><path d="M280.6,41.6 l3.4,1.8 v3.8 l-3.4,-1.8z" fill="#3566c0" stroke="#34456e" stroke-width="0.4" stroke-linecap="butt" stroke-linejoin="round" opacity="1"/><path d="M287.4,41.6 l-3.4,1.8 v3.8 l3.4,-1.8z" fill="#6f8cc6" stroke="#34456e" stroke-width="0.4" stroke-linecap="butt" stroke-linejoin="round" opacity="1"/>
<path d="M294.6,39.8 l3.4,1.8 l-3.4,1.8 l-3.4,-1.8z" fill="#eef3fb" stroke="#34456e" stroke-width="0.4" stroke-linecap="butt" stroke-linejoin="round" opacity="1"/><path d="M291.20000000000005,41.6 l3.4,1.8 v3.8 l-3.4,-1.8z" fill="#a9bfe6" stroke="#34456e" stroke-width="0.4" stroke-linecap="butt" stroke-linejoin="round" opacity="1"/><path d="M298.0,41.6 l-3.4,1.8 v3.8 l3.4,-1.8z" fill="#3566c0" stroke="#34456e" stroke-width="0.4" stroke-linecap="butt" stroke-linejoin="round" opacity="1"/>
<path d="M305,39.8 l3.4,1.8 l-3.4,1.8 l-3.4,-1.8z" fill="#eef3fb" stroke="#34456e" stroke-width="0.4" stroke-linecap="butt" stroke-linejoin="round" opacity="1"/><path d="M301.6,41.6 l3.4,1.8 v3.8 l-3.4,-1.8z" fill="#a9bfe6" stroke="#34456e" stroke-width="0.4" stroke-linecap="butt" stroke-linejoin="round" opacity="1"/><path d="M308.4,41.6 l-3.4,1.8 v3.8 l3.4,-1.8z" fill="#3566c0" stroke="#34456e" stroke-width="0.4" stroke-linecap="butt" stroke-linejoin="round" opacity="1"/>
<path d="M316,39.8 l3.4,1.8 l-3.4,1.8 l-3.4,-1.8z" fill="#eef3fb" stroke="#34456e" stroke-width="0.4" stroke-linecap="butt" stroke-linejoin="round" opacity="1"/><path d="M312.6,41.6 l3.4,1.8 v3.8 l-3.4,-1.8z" fill="#3566c0" stroke="#34456e" stroke-width="0.4" stroke-linecap="butt" stroke-linejoin="round" opacity="1"/><path d="M319.4,41.6 l-3.4,1.8 v3.8 l3.4,-1.8z" fill="#6f8cc6" stroke="#34456e" stroke-width="0.4" stroke-linecap="butt" stroke-linejoin="round" opacity="1"/>
<line x1="322.4" y1="39.0" x2="322.4" y2="48.0" stroke="#c5c2b2" stroke-width="0.6" stroke-opacity="1"/><line x1="323.0" y1="39.0" x2="323.0" y2="48.0" stroke="#fff" stroke-width="0.6" stroke-opacity="1"/>
<rect x="325.6" y="41.8" width="8.0" height="5.2" fill="#263a78" stroke="#131f4a" stroke-width="0.5" rx="0.6" fill-opacity="1"/>
<rect x="327.2" y="40.6" width="2.8" height="1.6" fill="#263a78" rx="0" fill-opacity="1"/>
<circle cx="329.6" cy="44.4" r="1.7" fill="#c9d6ee" stroke="#0e1838" stroke-width="0.5" fill-opacity="1"/>
<line x1="336.4" y1="39.0" x2="336.4" y2="48.0" stroke="#c5c2b2" stroke-width="0.6" stroke-opacity="1"/><line x1="337.0" y1="39.0" x2="337.0" y2="48.0" stroke="#fff" stroke-width="0.6" stroke-opacity="1"/>
<rect x="337.6" y="39.0" width="0.9" height="0.9" fill="#c9c6b6" rx="0" fill-opacity="1"/><rect x="337.6" y="40.8" width="0.9" height="0.9" fill="#c9c6b6" rx="0" fill-opacity="1"/><rect x="337.6" y="42.6" width="0.9" height="0.9" fill="#c9c6b6" rx="0" fill-opacity="1"/><rect x="337.6" y="44.4" width="0.9" height="0.9" fill="#c9c6b6" rx="0" fill-opacity="1"/><rect x="337.6" y="46.2" width="0.9" height="0.9" fill="#c9c6b6" rx="0" fill-opacity="1"/><rect x="337.6" y="48.0" width="0.9" height="0.9" fill="#c9c6b6" rx="0" fill-opacity="1"/>
<circle cx="343.5" cy="43.6" r="3.4" fill="#dbe6f7" stroke="#7f9bd0" stroke-width="0.7" fill-opacity="1"/>
<circle cx="343.5" cy="43.6" r="1.4" fill="#9db6e0" fill-opacity="1"/>
<rect x="350.4" y="38.6" width="64.0" height="10.0" fill="#f1efe4" stroke="#e0ddce" stroke-width="0.5" rx="0" fill-opacity="1"/>
<rect x="405.0" y="39.4" width="8.6" height="8.4" fill="#eeebe0" stroke="#dcd9ca" stroke-width="0.5" rx="1" fill-opacity="1"/>
<path d="M407.5,42.8 l1.8,1.8 l1.8,-1.8" fill="none" stroke="#c4c1b4" stroke-width="1.0" stroke-linecap="butt" stroke-linejoin="round" opacity="1"/>
<line x1="417.6" y1="39.0" x2="417.6" y2="48.0" stroke="#c5c2b2" stroke-width="0.6" stroke-opacity="1"/><line x1="418.2" y1="39.0" x2="418.2" y2="48.0" stroke="#fff" stroke-width="0.6" stroke-opacity="1"/>
<rect x="419.6" y="39.0" width="0.9" height="0.9" fill="#c9c6b6" rx="0" fill-opacity="1"/><rect x="419.6" y="40.8" width="0.9" height="0.9" fill="#c9c6b6" rx="0" fill-opacity="1"/><rect x="419.6" y="42.6" width="0.9" height="0.9" fill="#c9c6b6" rx="0" fill-opacity="1"/><rect x="419.6" y="44.4" width="0.9" height="0.9" fill="#c9c6b6" rx="0" fill-opacity="1"/><rect x="419.6" y="46.2" width="0.9" height="0.9" fill="#c9c6b6" rx="0" fill-opacity="1"/><rect x="419.6" y="48.0" width="0.9" height="0.9" fill="#c9c6b6" rx="0" fill-opacity="1"/>
<text x="428.2" y="46.6" font-family="Liberation Sans, sans-serif" font-size="8" font-weight="normal" font-style="normal" fill="#1a1a1a" text-anchor="middle">A</text>
<text x="437.4" y="46.6" font-family="Liberation Sans, sans-serif" font-size="8" font-weight="normal" font-style="normal" fill="#1a1a1a" text-anchor="middle">A</text>
<line x1="441.3" y1="40.0" x2="441.3" y2="47.4" stroke="#1a1a1a" stroke-width="0.7" stroke-opacity="1"/>
<text x="448.6" y="46.6" font-family="Liberation Sans, sans-serif" font-size="7.6" font-weight="bold" font-style="italic" fill="#4a3d10" text-anchor="middle">A</text>
<line x1="449.4" y1="46.6" x2="453.0" y2="40.6" stroke="#d8b020" stroke-width="1.3" stroke-opacity="1"/>
<circle cx="459.4" cy="43.0" r="2.6" fill="#dfe8f6" stroke="#56627e" stroke-width="0.8" fill-opacity="1"/>
<line x1="461.2" y1="44.8" x2="464.0" y2="47.2" stroke="#4c4f5a" stroke-width="1.2" stroke-opacity="1"/>
<text x="459.4" y="44.6" font-family="Liberation Sans, sans-serif" font-size="3.6" font-weight="bold" font-style="normal" fill="#234" text-anchor="middle">A</text>
<text x="469.0" y="45.2" font-family="Liberation Sans, sans-serif" font-size="3.4" font-weight="bold" font-style="normal" fill="#234" text-anchor="middle">abc</text>
<path d="M467,45.6 l2,1.6 l4.4,-3.6" fill="none" stroke="#2d5aa8" stroke-width="1.0" stroke-linecap="butt" stroke-linejoin="round" opacity="1"/>
<text x="480.6" y="46.4" font-family="Liberation Sans, sans-serif" font-size="7.6" font-weight="bold" font-style="normal" fill="#1a1a1a" text-anchor="middle">A</text>
<line x1="479.6" y1="46.6" x2="484.6" y2="42.2" stroke="#c8a020" stroke-width="1.2" stroke-opacity="1"/>
<rect x="488.6" y="40.4" width="7.4" height="6.8" fill="#e6eefa" stroke="#34456e" stroke-width="0.7" rx="0" fill-opacity="1"/>
<text x="492.3" y="45.6" font-family="Liberation Sans, sans-serif" font-size="4.6" font-weight="bold" font-style="normal" fill="#234" text-anchor="middle">A</text>
<rect x="499.1" y="40.2" width="7.6" height="7.2" fill="#fff" stroke="#1c2a5c" stroke-width="0.9" rx="0" fill-opacity="1"/>
<text x="502.9" y="46.0" font-family="Liberation Sans, sans-serif" font-size="6.4" font-weight="bold" font-style="normal" fill="#1c2a5c" text-anchor="middle">A</text>
<rect x="510.3" y="40.2" width="7.0" height="3.4" fill="#e7cf44" stroke="#6f6420" stroke-width="0.5" rx="0" fill-opacity="1"/>
<path d="M510.1,47.0 l2,-3 l2,3 m0.6,0 l2,-3 l1.6,3" fill="none" stroke="#1c2a5c" stroke-width="0.9" stroke-linecap="butt" stroke-linejoin="round" opacity="1"/>
<line x1="521.4" y1="39.0" x2="521.4" y2="48.0" stroke="#c5c2b2" stroke-width="0.6" stroke-opacity="1"/><line x1="522.0" y1="39.0" x2="522.0" y2="48.0" stroke="#fff" stroke-width="0.6" stroke-opacity="1"/>
<line x1="4.4" y1="55.8" x2="4.4" y2="87.8" stroke="#fff" stroke-width="0.6" stroke-opacity="1"/>
<line x1="5.0" y1="55.8" x2="5.0" y2="87.8" stroke="#a9a696" stroke-width="0.6" stroke-opacity="1"/>
<line x1="6.0" y1="55.8" x2="6.0" y2="87.8" stroke="#fff" stroke-width="0.6" stroke-opacity="1"/>
<line x1="6.6" y1="55.8" x2="6.6" y2="87.8" stroke="#a9a696" stroke-width="0.6" stroke-opacity="1"/>
<rect x="586.6" y="55.0" width="7.4" height="25.2" fill="#f3f2ea" rx="0" fill-opacity="1"/>
<rect x="587.0" y="55.6" width="6.8" height="6.6" fill="#c5d5f6" stroke="#a8bcec" stroke-width="0.4" rx="1" fill-opacity="1"/>
<path d="M588.6,59.8 l1.8,-1.8 l1.8,1.8" fill="none" stroke="#3c5896" stroke-width="1.0" stroke-linecap="butt" stroke-linejoin="round" opacity="1"/>
<rect x="587.0" y="66.0" width="6.8" height="5.6" fill="#c5d5f6" stroke="#a8bcec" stroke-width="0.4" rx="1" fill-opacity="1"/>
<rect x="587.0" y="73.6" width="6.8" height="6.4" fill="#c5d5f6" stroke="#a8bcec" stroke-width="0.4" rx="1" fill-opacity="1"/>
<path d="M588.6,76 l1.8,1.8 l1.8,-1.8" fill="none" stroke="#3c5896" stroke-width="1.0" stroke-linecap="butt" stroke-linejoin="round" opacity="1"/>
<rect x="555.6" y="81.6" width="30.4" height="7.4" fill="#f6f5ee" rx="0" fill-opacity="1"/>
<rect x="556.0" y="82.0" width="6.0" height="6.4" fill="#c5d5f6" stroke="#a8bcec" stroke-width="0.4" rx="1" fill-opacity="1"/>
<path d="M559.8,83.6 l-1.7,1.7 l1.7,1.7" fill="none" stroke="#3c5896" stroke-width="1.0" stroke-linecap="butt" stroke-linejoin="round" opacity="1"/>
<rect x="563.2" y="82.0" width="7.6" height="6.4" fill="#c5d5f6" stroke="#a8bcec" stroke-width="0.4" rx="1" fill-opacity="1"/>
<rect x="578.0" y="82.0" width="6.6" height="6.4" fill="#c5d5f6" stroke="#a8bcec" stroke-width="0.4" rx="1" fill-opacity="1"/>
<path d="M580.4,83.6 l1.7,1.7 l-1.7,1.7" fill="none" stroke="#3c5896" stroke-width="1.0" stroke-linecap="butt" stroke-linejoin="round" opacity="1"/>
<defs><linearGradient id="gcol" x1="0" y1="0" x2="1" y2="0"><stop offset="0" stop-color="#f9f8f3"/><stop offset="0.75" stop-color="#f1efe4"/><stop offset="1" stop-color="#dedbc9"/></linearGradient><radialGradient id="gsph" cx="0.35" cy="0.3" r="0.8"><stop offset="0" stop-color="#f6f9fe"/><stop offset="0.55" stop-color="#9fb3d8"/><stop offset="1" stop-color="#4f6aa6"/></radialGradient><radialGradient id="gsph2" cx="0.35" cy="0.3" r="0.8"><stop offset="0" stop-color="#fff0a0"/><stop offset="0.5" stop-color="#e8a030"/><stop offset="1" stop-color="#7a3a9a"/></radialGradient></defs>
<rect x="0.0" y="94.6" width="11.6" height="241.6" fill="url(#gcol)" rx="0" fill-opacity="1"/>
<rect x="12.2" y="94.6" width="11.8" height="242.0" fill="url(#gcol)" rx="0" fill-opacity="1"/>
<rect x="24.6" y="94.6" width="11.8" height="306.0" fill="url(#gcol)" rx="0" fill-opacity="1"/>
<line x1="0.0" y1="336.3" x2="11.6" y2="336.3" stroke="#cfccba" stroke-width="0.6" stroke-opacity="1"/>
<line x1="12.2" y1="336.7" x2="24.0" y2="336.7" stroke="#cfccba" stroke-width="0.6" stroke-opacity="1"/>
<line x1="24.6" y1="400.7" x2="36.4" y2="400.7" stroke="#cfccba" stroke-width="0.6" stroke-opacity="1"/>
<rect x="2.0" y="96.6" width="0.9" height="0.9" fill="#c9c6b6" rx="0" fill-opacity="1"/><rect x="3.8" y="96.6" width="0.9" height="0.9" fill="#c9c6b6" rx="0" fill-opacity="1"/><rect x="5.6" y="96.6" width="0.9" height="0.9" fill="#c9c6b6" rx="0" fill-opacity="1"/><rect x="7.4" y="96.6" width="0.9" height="0.9" fill="#c9c6b6" rx="0" fill-opacity="1"/><rect x="9.2" y="96.6" width="0.9" height="0.9" fill="#c9c6b6" rx="0" fill-opacity="1"/>
<rect x="14.0" y="96.6" width="0.9" height="0.9" fill="#c9c6b6" rx="0" fill-opacity="1"/><rect x="15.8" y="96.6" width="0.9" height="0.9" fill="#c9c6b6" rx="0" fill-opacity="1"/><rect x="17.6" y="96.6" width="0.9" height="0.9" fill="#c9c6b6" rx="0" fill-opacity="1"/><rect x="19.4" y="96.6" width="0.9" height="0.9" fill="#c9c6b6" rx="0" fill-opacity="1"/><rect x="21.2" y="96.6" width="0.9" height="0.9" fill="#c9c6b6" rx="0" fill-opacity="1"/>
<rect x="26.4" y="96.6" width="0.9" height="0.9" fill="#c9c6b6" rx="0" fill-opacity="1"/><rect x="28.2" y="96.6" width="0.9" height="0.9" fill="#c9c6b6" rx="0" fill-opacity="1"/><rect x="30.0" y="96.6" width="0.9" height="0.9" fill="#c9c6b6" rx="0" fill-opacity="1"/><rect x="31.8" y="96.6" width="0.9" height="0.9" fill="#c9c6b6" rx="0" fill-opacity="1"/><rect x="33.6" y="96.6" width="0.9" height="0.9" fill="#c9c6b6" rx="0" fill-opacity="1"/>
<line x1="2.4" y1="107.2" x2="9.2" y2="100.8" stroke="#1a1a1a" stroke-width="0.9" stroke-opacity="1"/>
<line x1="2.4" y1="117.5" x2="9.2" y2="111.1" stroke="#1a1a1a" stroke-width="0.9" stroke-opacity="1"/>
<circle cx="2.8" cy="117.1" r="0.8" fill="#1a1a1a" fill-opacity="1"/>
<circle cx="8.8" cy="111.5" r="0.8" fill="#1a1a1a" fill-opacity="1"/>
<path d="M2.4,127.0 h4.6 a2,2 0 0 0 0,-4 h-1.6" fill="none" stroke="#2c3a6e" stroke-width="0.9" stroke-linecap="butt" stroke-linejoin="round" opacity="1"/>
<path d="M5.2,121.6 l2,1.4 l-2,1.2z" fill="#2c3a6e" opacity="1"/>
<path d="M5.8,131.5 l3.4,2.6 l-1.3,4 h-4.2 l-1.3,-4z" fill="none" stroke="#1a1a1a" stroke-width="0.9" stroke-linecap="butt" stroke-linejoin="round" opacity="1"/>
<rect x="2.2" y="142.8" width="7.2" height="4.8" fill="none" stroke="#1a1a1a" stroke-width="0.9" rx="0" fill-opacity="1"/>
<path d="M2.8,158.9 q0,-6 6,-6.6" fill="none" stroke="#1a1a1a" stroke-width="1.0" stroke-linecap="butt" stroke-linejoin="round" opacity="1"/>
<circle cx="5.8" cy="165.8" r="3.3" fill="none" stroke="#1a1a1a" stroke-width="0.9" fill-opacity="1"/>
<line x1="5.8" y1="165.8" x2="7.6" y2="164.0" stroke="#1a1a1a" stroke-width="0.7" stroke-opacity="1"/>
<path d="M2.8,175.10000000000002 q-1.4,-2.6 1.6,-2 q1.6,-1.6 3,0 q2.6,0 1.4,2.4 q1.4,2 -1,3 q-1,2 -3,0.6 q-3,0.6 -2,-2z" fill="none" stroke="#2c3a6e" stroke-width="0.9" stroke-linecap="butt" stroke-linejoin="round" opacity="1"/>
<path d="M2.1999999999999997,188.4 q1.8,-5 3.6,-1 t3.6,-2.6" fill="none" stroke="#2c3a6e" stroke-width="0.9" stroke-linecap="butt" stroke-linejoin="round" opacity="1"/>
<ellipse cx="5.8" cy="196.7" rx="3.5" ry="2.3" fill="none" stroke="#1a1a1a" stroke-width="1.0" fill-opacity="1"/>
<path d="M8.8,208.4 a3.3,2.3 0 1 1 -1.4,-3.2" fill="none" stroke="#2c3a6e" stroke-width="0.9" stroke-linecap="butt" stroke-linejoin="round" opacity="1"/>
<path d="M6.3999999999999995,204.0 l2.2,1.6 l-2.4,0.8z" fill="#2c3a6e" opacity="1"/>
<circle cx="5.2" cy="216.7" r="2.6" fill="#d9e6c8" stroke="#2f6a3a" stroke-width="0.7" fill-opacity="1"/>
<rect x="5.6" y="217.7" width="3.6" height="2.8" fill="#cbd9f0" stroke="#2c3a6e" stroke-width="0.6" rx="0" fill-opacity="1"/>
<line x1="2.2" y1="220.3" x2="4.8" y2="220.3" stroke="#1a1a1a" stroke-width="0.7" stroke-opacity="1"/>
<rect x="2.8" y="225.0" width="3.4" height="3.0" fill="#e6eefa" stroke="#2c3a6e" stroke-width="0.7" rx="0" fill-opacity="1"/>
<circle cx="7.2" cy="228.8" r="2.0" fill="#d9e6c8" stroke="#2f6a3a" stroke-width="0.7" fill-opacity="1"/>
<rect x="5.2" y="237.5" width="1.2" height="1.2" fill="#1a1a1a" rx="0" fill-opacity="1"/>
<rect x="2.6" y="245.2" width="6.4" height="6.0" fill="#dbe3f2" stroke="#2c3a6e" stroke-width="0.8" rx="0" fill-opacity="1"/>
<line x1="2.6" y1="248.2" x2="9.0" y2="248.2" stroke="#2c3a6e" stroke-width="0.7" stroke-opacity="1"/>
<line x1="4.8" y1="245.2" x2="4.8" y2="251.2" stroke="#2c3a6e" stroke-width="0.7" stroke-opacity="1"/>
<line x1="7.0" y1="245.2" x2="7.0" y2="251.2" stroke="#2c3a6e" stroke-width="0.7" stroke-opacity="1"/>
<line x1="2.6" y1="246.6" x2="9.0" y2="246.6" stroke="#2c3a6e" stroke-width="0.5" stroke-opacity="1"/>
<line x1="2.6" y1="249.8" x2="9.0" y2="249.8" stroke="#2c3a6e" stroke-width="0.5" stroke-opacity="1"/>
<rect x="2.6" y="255.5" width="6.4" height="6.0" fill="#3a3f55" stroke="#1a1a2a" stroke-width="0.7" rx="0" fill-opacity="1"/>
<line x1="2.6" y1="258.5" x2="9.0" y2="258.5" stroke="#cfd6e6" stroke-width="0.6" stroke-opacity="1"/>
<line x1="4.8" y1="255.5" x2="4.8" y2="261.5" stroke="#cfd6e6" stroke-width="0.6" stroke-opacity="1"/>
<line x1="7.0" y1="255.5" x2="7.0" y2="261.5" stroke="#cfd6e6" stroke-width="0.6" stroke-opacity="1"/>
<rect x="2.4" y="266.4" width="5.0" height="4.6" fill="#cbd9f0" stroke="#3f5a9e" stroke-width="0.7" rx="0" fill-opacity="1"/>
<circle cx="7.4" cy="269.6" r="2.2" fill="#9fb6e2" stroke="#3f5a9e" stroke-width="0.7" fill-opacity="1"/>
<rect x="2.4" y="276.3" width="6.8" height="5.6" fill="#b6caee" stroke="#3f5a9e" stroke-width="0.8" rx="0" fill-opacity="1"/>
<rect x="2.4" y="276.3" width="6.8" height="1.6" fill="#4a6cb6" rx="0" fill-opacity="1"/>
<line x1="2.4" y1="279.7" x2="9.2" y2="279.7" stroke="#3f5a9e" stroke-width="0.5" stroke-opacity="1"/>
<line x1="5.8" y1="277.9" x2="5.8" y2="281.9" stroke="#3f5a9e" stroke-width="0.5" stroke-opacity="1"/>
<text x="5.8" y="292.6" font-family="Liberation Sans, sans-serif" font-size="9" font-weight="bold" font-style="normal" fill="#1a1a1a" text-anchor="middle">A</text>
<line x1="1.4" y1="295.8" x2="10.4" y2="295.8" stroke="#c5c2b2" stroke-width="0.6" stroke-opacity="1"/>
<line x1="1.4" y1="296.4" x2="10.4" y2="296.4" stroke="#fff" stroke-width="0.6" stroke-opacity="1"/>
<rect x="2.0" y="298.6" width="0.9" height="0.9" fill="#c9c6b6" rx="0" fill-opacity="1"/><rect x="3.8" y="298.6" width="0.9" height="0.9" fill="#c9c6b6" rx="0" fill-opacity="1"/><rect x="5.6" y="298.6" width="0.9" height="0.9" fill="#c9c6b6" rx="0" fill-opacity="1"/><rect x="7.4" y="298.6" width="0.9" height="0.9" fill="#c9c6b6" rx="0" fill-opacity="1"/><rect x="9.2" y="298.6" width="0.9" height="0.9" fill="#c9c6b6" rx="0" fill-opacity="1"/>
<path d="M5.8,304.40000000000003 l1.6,2.2 h-1 v1.6 h2 v-1 l2,1.6 l-2,1.6 v-1 h-2 v1.6 h1 l-1.6,2.2 l-1.6,-2.2 h1 v-1.6 h-2 v1 l-2,-1.6 l2,-1.6 v1 h2 v-1.6 h-1z" fill="#6f8fd0" stroke="#2d4a8a" stroke-width="0.4" stroke-linecap="butt" stroke-linejoin="round" opacity="1"/>
<circle cx="5.8" cy="318.2" r="3.0" fill="url(#gsph)" stroke="#2d4a8a" stroke-width="0.4" fill-opacity="1"/>
<ellipse cx="5.8" cy="318.2" rx="3.8" ry="1.4" fill="none" stroke="#3f62ae" stroke-width="0.6" fill-opacity="1"/>
<circle cx="4.8" cy="329.6" r="2.2" fill="#4aa84a" stroke="#1f6a2a" stroke-width="0.5" fill-opacity="1"/>
<path d="M5.2,328.6 l3.6,-3.4 l0.4,2.4z" fill="#3f62ae" stroke="#1c2a5c" stroke-width="0.4" stroke-linecap="butt" stroke-linejoin="round" opacity="1"/>
<path d="M14.4,106.6 l4.6,-5 l2.2,1.4 l-4.4,5z" fill="#e9d9a4" stroke="#6e6030" stroke-width="0.6" stroke-linecap="butt" stroke-linejoin="round" opacity="1"/>
<line x1="14.4" y1="107.2" x2="21.6" y2="107.2" stroke="#555" stroke-width="0.6" stroke-opacity="1"/>
<circle cx="16.6" cy="112.7" r="1.7" fill="none" stroke="#2c3a6e" stroke-width="0.9" fill-opacity="1"/>
<circle cx="19.6" cy="115.9" r="1.9" fill="none" stroke="#2c3a6e" stroke-width="0.9" fill-opacity="1"/>
<circle cx="15.8" cy="116.3" r="1.0" fill="none" stroke="#2c3a6e" stroke-width="0.7" fill-opacity="1"/>
<path d="M17.4,121.6 v6 h-3.4z" fill="#9fb3d8" stroke="#2c3a6e" stroke-width="0.7" stroke-linecap="butt" stroke-linejoin="round" opacity="1"/>
<path d="M18.6,121.6 v6 h3.4z" fill="#dfe8f6" stroke="#2c3a6e" stroke-width="0.7" stroke-linecap="butt" stroke-linejoin="round" opacity="1"/>
<line x1="18.0" y1="120.8" x2="18.0" y2="128.4" stroke="#2c3a6e" stroke-width="0.5" stroke-opacity="1"/>
<path d="M14.4,137.9 a3.6,4.4 0 0 1 7.2,0z" fill="none" stroke="#2c3a6e" stroke-width="0.9" stroke-linecap="butt" stroke-linejoin="round" opacity="1"/>
<path d="M16.2,137.9 a1.8,2.4 0 0 1 3.6,0" fill="none" stroke="#2c3a6e" stroke-width="0.8" stroke-linecap="butt" stroke-linejoin="round" opacity="1"/>
<line x1="14.0" y1="137.9" x2="22.0" y2="137.9" stroke="#2c3a6e" stroke-width="0.9" stroke-opacity="1"/>
<rect x="14.8" y="142.0" width="2.6" height="2.6" fill="#f4f7fc" stroke="#1a1a1a" stroke-width="0.7" rx="0" fill-opacity="1"/>
<rect x="14.8" y="145.8" width="2.6" height="2.6" fill="#f4f7fc" stroke="#1a1a1a" stroke-width="0.7" rx="0" fill-opacity="1"/>
<rect x="18.6" y="142.0" width="2.6" height="2.6" fill="#f4f7fc" stroke="#1a1a1a" stroke-width="0.7" rx="0" fill-opacity="1"/>
<rect x="18.6" y="145.8" width="2.6" height="2.6" fill="#f4f7fc" stroke="#1a1a1a" stroke-width="0.7" rx="0" fill-opacity="1"/>
<path d="M18.0,151.9 v7.2 M14.4,155.5 h7.2" fill="none" stroke="#24407e" stroke-width="1.0" stroke-linecap="butt" stroke-linejoin="round" opacity="1"/>
<path d="M18.0,151.3 l1.4,1.8 h-2.8z M18.0,159.7 l1.4,-1.8 h-2.8z M13.8,155.5 l1.8,1.4 v-2.8z M22.2,155.5 l-1.8,1.4 v-2.8z" fill="#24407e" opacity="1"/>
<path d="M19.0,162.60000000000002 a3.3,3.3 0 1 1 -3.6,1" fill="none" stroke="#2c3a6e" stroke-width="1.1" stroke-linecap="butt" stroke-linejoin="round" opacity="1"/>
<path d="M17.0,161.4 l2.6,1.2 l-2.2,1.6z" fill="#2c3a6e" opacity="1"/>
<rect x="14.6" y="172.9" width="6.6" height="6.4" fill="#eef3fb" stroke="#2c3a6e" stroke-width="0.7" rx="0" fill-opacity="1"/>
<rect x="14.6" y="176.1" width="3.2" height="3.2" fill="#b6caee" stroke="#2c3a6e" stroke-width="0.6" rx="0" fill-opacity="1"/>
<path d="M15.0,189.6 v-6.4 h2.6 l3.2,6.4z" fill="#dfe8f6" stroke="#2c3a6e" stroke-width="0.8" stroke-linecap="butt" stroke-linejoin="round" opacity="1"/>
<line x1="17.6" y1="183.2" x2="17.6" y2="189.6" stroke="#2c3a6e" stroke-width="0.6" stroke-opacity="1"/>
<line x1="14.4" y1="197.5" x2="21.6" y2="195.9" stroke="#2c3a6e" stroke-width="0.8" stroke-opacity="1"/>
<line x1="16.6" y1="200.1" x2="18.2" y2="197.3" stroke="#2c3a6e" stroke-width="0.8" stroke-opacity="1"/>
<line x1="19.0" y1="195.9" x2="20.2" y2="193.7" stroke="#8a97b8" stroke-width="0.6" stroke-opacity="1"/>
<line x1="14.4" y1="207.6" x2="19.0" y2="206.8" stroke="#2c3a6e" stroke-width="0.8" stroke-opacity="1"/>
<line x1="20.6" y1="203.4" x2="18.8" y2="210.4" stroke="#2c3a6e" stroke-width="0.8" stroke-opacity="1"/>
<line x1="19.0" y1="206.8" x2="19.8" y2="206.6" stroke="#8a97b8" stroke-width="0.6" stroke-opacity="1"/>
<rect x="14.4" y="214.7" width="7.2" height="5.2" fill="#f4f7fc" stroke="#2c3a6e" stroke-width="0.8" rx="0" fill-opacity="1"/>
<rect x="17.4" y="219.5" width="1.4" height="1.0" fill="#f4f3ea" rx="0" fill-opacity="1"/>
<path d="M16.8,225.00000000000003 h-2.4 v5.2 h7.2 v-5.2 h-2.4" fill="#f4f7fc" stroke="#2c3a6e" stroke-width="0.8" stroke-linecap="butt" stroke-linejoin="round" opacity="1"/>
<path d="M14.2,236.70000000000002 l2,1.2 l-2,1.2z" fill="#1a1a1a" opacity="1"/>
<path d="M21.8,236.70000000000002 l-2,1.2 l2,1.2z" fill="#1a1a1a" opacity="1"/>
<line x1="15.6" y1="237.9" x2="17.6" y2="237.9" stroke="#1a1a1a" stroke-width="0.9" stroke-opacity="1"/>
<line x1="18.4" y1="237.9" x2="20.4" y2="237.9" stroke="#1a1a1a" stroke-width="0.9" stroke-opacity="1"/>
<path d="M15.0,251.60000000000002 v-4 l3,-2.8 h3.4" fill="none" stroke="#2c3a6e" stroke-width="0.9" stroke-linecap="butt" stroke-linejoin="round" opacity="1"/>
<path d="M15.0,261.9 v-2.4 q0,-4.2 6.4,-4.4" fill="none" stroke="#2c3a6e" stroke-width="0.9" stroke-linecap="butt" stroke-linejoin="round" opacity="1"/>
<path d="M14.8,272.0 l6.4,-6.4 M14.8,267.8 l3,3 M18.4,265.8 l3,3" fill="none" stroke="#e0641e" stroke-width="1.1" stroke-linecap="butt" stroke-linejoin="round" opacity="1"/>
<circle cx="18.0" cy="268.8" r="1.1" fill="#c83c14" fill-opacity="1"/>
<line x1="13.4" y1="276.2" x2="22.8" y2="276.2" stroke="#c5c2b2" stroke-width="0.6" stroke-opacity="1"/>
<line x1="13.4" y1="276.8" x2="22.8" y2="276.8" stroke="#fff" stroke-width="0.6" stroke-opacity="1"/>
<rect x="14.0" y="279.0" width="0.9" height="0.9" fill="#c9c6b6" rx="0" fill-opacity="1"/><rect x="15.8" y="279.0" width="0.9" height="0.9" fill="#c9c6b6" rx="0" fill-opacity="1"/><rect x="17.6" y="279.0" width="0.9" height="0.9" fill="#c9c6b6" rx="0" fill-opacity="1"/><rect x="19.4" y="279.0" width="0.9" height="0.9" fill="#c9c6b6" rx="0" fill-opacity="1"/><rect x="21.2" y="279.0" width="0.9" height="0.9" fill="#c9c6b6" rx="0" fill-opacity="1"/>
<path d="M14.6,288.2 l3,-2 l3.6,2.6 l-3,1.8z" fill="#8fa6d6" stroke="#34456e" stroke-width="0.5" stroke-linecap="butt" stroke-linejoin="round" opacity="1"/>
<path d="M18.6,284.59999999999997 l2.8,-0.6 l-0.6,2.8z" fill="#c83c3c" opacity="1"/>
<circle cx="16.0" cy="285.2" r="1.0" fill="#3f62ae" fill-opacity="1"/>
<circle cx="17.4" cy="296.8" r="2.5" fill="#e9eef6" stroke="#56627e" stroke-width="0.8" fill-opacity="1"/>
<line x1="19.2" y1="298.6" x2="21.6" y2="301.0" stroke="#4c4f5a" stroke-width="1.1" stroke-opacity="1"/>
<text x="20.2" y="296.8" font-family="Liberation Sans, sans-serif" font-size="3.6" font-weight="normal" font-style="normal" fill="#333" text-anchor="start">±</text>
<path d="M18.0,304.20000000000005 l1.6,2 h-1 v1.4 h1.6 v-1 l2,1.6 l-2,1.6 v-1 h-1.6 v1.4 h1 l-1.6,2 l-1.6,-2 h1 v-1.4 h-1.6 v1 l-2,-1.6 l2,-1.6 v1 h1.6 v-1.4 h-1z" fill="#6f8fd0" stroke="#2d4a8a" stroke-width="0.4" stroke-linecap="butt" stroke-linejoin="round" opacity="1"/>
<path d="M20.4,310.6 h1.6 l-0.8,1z" fill="#1a1a1a" opacity="1"/>
<rect x="14.6" y="316.2" width="6.4" height="4.4" fill="#263a78" stroke="#131f4a" stroke-width="0.5" rx="0.6" fill-opacity="1"/>
<circle cx="17.6" cy="318.4" r="1.4" fill="#c9d6ee" fill-opacity="1"/>
<path d="M20.4,320.8 h1.6 l-0.8,1z" fill="#1a1a1a" opacity="1"/>
<ellipse cx="16.4" cy="328.0" rx="1.0" ry="2.6" fill="#5f86c9" stroke="#2d4a8a" stroke-width="0.4" fill-opacity="1"/>
<ellipse cx="19.2" cy="327.6" rx="1.0" ry="2.6" fill="#5f86c9" stroke="#2d4a8a" stroke-width="0.4" fill-opacity="1"/>
<path d="M20.4,331.0 h1.6 l-0.8,1z" fill="#1a1a1a" opacity="1"/>
<path d="M28.2,106.0 v-3 l2,-1.4 l2.6,1 v3 l-2,1.4z" fill="#cbd9f0" stroke="#8fa6d6" stroke-width="0.5" stroke-linecap="butt" stroke-linejoin="round" opacity="1"/>
<path d="M26.6,112.7 l2.4,-1.8 h5 l-2.4,1.8z" fill="#f4f7fc" stroke="#34456e" stroke-width="0.45" stroke-linecap="butt" stroke-linejoin="round" opacity="1"/><path d="M26.6,112.7 h5 v5 h-5z" fill="#dbe5f5" stroke="#34456e" stroke-width="0.45" stroke-linecap="butt" stroke-linejoin="round" opacity="1"/><path d="M31.6,112.7 l2.4,-1.8 v5 l-2.4,1.8z" fill="#a9bde2" stroke="#34456e" stroke-width="0.45" stroke-linecap="butt" stroke-linejoin="round" opacity="1"/>
<path d="M26.8,121.6 l6.6,4.4 v2 h-6.6z" fill="#9fb3d8" stroke="#34456e" stroke-width="0.5" stroke-linecap="butt" stroke-linejoin="round" opacity="1"/>
<path d="M26.8,121.6 l1.8,-0.8 l6.6,4.4 l-1.8,0.8z" fill="#dfe8f6" stroke="#34456e" stroke-width="0.4" stroke-linecap="butt" stroke-linejoin="round" opacity="1"/>
<path d="M30.2,131.1 l3,6 a3,1.2 0 0 1 -6,0z" fill="url(#gsph)" stroke="#34456e" stroke-width="0.4" stroke-linecap="butt" stroke-linejoin="round" opacity="1"/>
<circle cx="30.2" cy="145.2" r="3.5" fill="url(#gsph)" stroke="#34456e" stroke-width="0.4" fill-opacity="1"/>
<path d="M27.2,153.1 v4.8 a3,1.2 0 0 0 6,0 v-4.8z" fill="#8fa8d6" stroke="#34456e" stroke-width="0.5" stroke-linecap="butt" stroke-linejoin="round" opacity="1"/>
<ellipse cx="30.2" cy="153.1" rx="3.0" ry="1.2" fill="#e6eefa" stroke="#34456e" stroke-width="0.5" fill-opacity="1"/>
<ellipse cx="30.2" cy="165.8" rx="3.6" ry="2.8" fill="url(#gsph)" stroke="#34456e" stroke-width="0.4" fill-opacity="1"/>
<ellipse cx="30.6" cy="165.4" rx="1.2" ry="0.8" fill="#eef3fb" stroke="#34456e" stroke-width="0.3" fill-opacity="1"/>
<path d="M30.2,172.3 l3.2,5.6 l-2.4,1.6 l-4,-1.6z" fill="#8fa8d6" stroke="#34456e" stroke-width="0.5" stroke-linecap="butt" stroke-linejoin="round" opacity="1"/>
<path d="M30.2,172.3 l0.8,7.2 l-4,-1.6z" fill="#dfe8f6" stroke="#34456e" stroke-width="0.4" stroke-linecap="butt" stroke-linejoin="round" opacity="1"/>
<rect x="27.0" y="183.4" width="6.4" height="6.0" fill="#5f79b2" stroke="#34456e" stroke-width="0.5" rx="0" fill-opacity="1"/>
<line x1="27.0" y1="185.4" x2="33.4" y2="185.4" stroke="#dfe8f6" stroke-width="0.7" stroke-opacity="1"/>
<line x1="27.0" y1="187.4" x2="33.4" y2="187.4" stroke="#dfe8f6" stroke-width="0.7" stroke-opacity="1"/>
<path d="M26.599999999999998,198.1 l3.4,-3.4 h3.8 l-3.4,3.4z" fill="#e9e9ef" stroke="#a9abbd" stroke-width="0.5" stroke-linecap="butt" stroke-linejoin="round" opacity="1"/>
<line x1="25.8" y1="202.2" x2="35.2" y2="202.2" stroke="#c5c2b2" stroke-width="0.6" stroke-opacity="1"/>
<line x1="25.8" y1="202.8" x2="35.2" y2="202.8" stroke="#fff" stroke-width="0.6" stroke-opacity="1"/>
<path d="M26.4,208.8 l2.4,-1.8 h5 l-2.4,1.8z" fill="#f4f7fc" stroke="#34456e" stroke-width="0.45" stroke-linecap="butt" stroke-linejoin="round" opacity="1"/><path d="M26.4,208.8 h5 v5 h-5z" fill="#dbe5f5" stroke="#34456e" stroke-width="0.45" stroke-linecap="butt" stroke-linejoin="round" opacity="1"/><path d="M31.4,208.8 l2.4,-1.8 v5 l-2.4,1.8z" fill="#a9bde2" stroke="#34456e" stroke-width="0.45" stroke-linecap="butt" stroke-linejoin="round" opacity="1"/>
<path d="M26.4,208.8 h5 v5 h-5z" fill="none" stroke="#1c2a5c" stroke-width="0.8" stroke-linecap="butt" stroke-linejoin="round" opacity="1"/>
<path d="M27.0,221.0 l3.2,-1.6 l3.2,1.6 l-3.2,1.6z" fill="#8fa8d6" stroke="#34456e" stroke-width="0.5" stroke-linecap="butt" stroke-linejoin="round" opacity="1"/>
<path d="M29.2,218.79999999999998 h0.6 v-1 h0.8 v1 h0.6 l-1,1.4z" fill="#34456e" opacity="1"/>
<path d="M27.0,221.0 v1.6 l3.2,1.6 l3.2,-1.6 v-1.6" fill="#5f79b2" stroke="#34456e" stroke-width="0.4" stroke-linecap="butt" stroke-linejoin="round" opacity="1"/>
<circle cx="29.4" cy="230.0" r="2.4" fill="#7f9bd0" stroke="#34456e" stroke-width="0.5" fill-opacity="1"/>
<circle cx="31.4" cy="231.4" r="2.2" fill="#5f86c9" stroke="#34456e" stroke-width="0.5" fill-opacity="1"/>
<path d="M27.2,241.6 a3,2.4 0 0 1 6,0 v1.6 h-6z" fill="#7f9bd0" stroke="#34456e" stroke-width="0.5" stroke-linecap="butt" stroke-linejoin="round" opacity="1"/>
<rect x="27.8" y="237.2" width="4.8" height="2.4" fill="#4a6cb6" stroke="#2d4a8a" stroke-width="0.4" rx="0" fill-opacity="1"/>
<path d="M26.6,249.20000000000002 l2.4,-1.8 h5 l-2.4,1.8z" fill="#f4f7fc" stroke="#34456e" stroke-width="0.45" stroke-linecap="butt" stroke-linejoin="round" opacity="1"/><path d="M26.6,249.20000000000002 h5 v5 h-5z" fill="#dbe5f5" stroke="#34456e" stroke-width="0.45" stroke-linecap="butt" stroke-linejoin="round" opacity="1"/><path d="M31.6,249.20000000000002 l2.4,-1.8 v5 l-2.4,1.8z" fill="#3a62b8" stroke="#34456e" stroke-width="0.45" stroke-linecap="butt" stroke-linejoin="round" opacity="1"/>
<line x1="25.8" y1="258.0" x2="35.2" y2="258.0" stroke="#c5c2b2" stroke-width="0.6" stroke-opacity="1"/>
<line x1="25.8" y1="258.6" x2="35.2" y2="258.6" stroke="#fff" stroke-width="0.6" stroke-opacity="1"/>
<ellipse cx="30.2" cy="264.2" rx="3.8" ry="2.8" fill="#cfe0f2" stroke="#3a62a8" stroke-width="0.8" fill-opacity="1"/>
<circle cx="29.1" cy="264.2" r="1.7" fill="#8fb2e2" stroke="#3a62a8" stroke-width="0.5" fill-opacity="1"/>
<circle cx="31.3" cy="264.2" r="1.7" fill="#8fb2e2" stroke="#3a62a8" stroke-width="0.5" fill-opacity="1"/>
<ellipse cx="30.2" cy="274.4" rx="3.8" ry="2.8" fill="#cfe0f2" stroke="#3a62a8" stroke-width="0.8" fill-opacity="1"/>
<circle cx="29.1" cy="274.4" r="1.7" fill="#5f86c9" stroke="#3a62a8" stroke-width="0.5" fill-opacity="1"/>
<circle cx="31.3" cy="274.4" r="1.7" fill="#8fb2e2" stroke="#3a62a8" stroke-width="0.5" fill-opacity="1"/>
<ellipse cx="30.2" cy="284.6" rx="3.8" ry="2.8" fill="#cfe0f2" stroke="#3a62a8" stroke-width="0.8" fill-opacity="1"/>
<circle cx="29.1" cy="284.6" r="1.7" fill="#8fb2e2" stroke="#3a62a8" stroke-width="0.5" fill-opacity="1"/>
<circle cx="31.3" cy="284.6" r="1.7" fill="#5f86c9" stroke="#3a62a8" stroke-width="0.5" fill-opacity="1"/>
<line x1="25.8" y1="290.6" x2="35.2" y2="290.6" stroke="#c5c2b2" stroke-width="0.6" stroke-opacity="1"/>
<line x1="25.8" y1="291.2" x2="35.2" y2="291.2" stroke="#fff" stroke-width="0.6" stroke-opacity="1"/>
<circle cx="30.2" cy="297.2" r="2.8" fill="none" stroke="#222" stroke-width="0.7" fill-opacity="1"/>
<path d="M30.2,293.4 v7.6 M26.4,297.2 h7.6" fill="none" stroke="#222" stroke-width="0.6" stroke-linecap="butt" stroke-linejoin="round" opacity="1"/>
<circle cx="30.2" cy="294.2" r="0.9" fill="#222" fill-opacity="1"/>
<circle cx="27.2" cy="298.2" r="0.9" fill="#222" fill-opacity="1"/>
<circle cx="33.2" cy="298.2" r="0.9" fill="#222" fill-opacity="1"/>
<circle cx="30.2" cy="307.6" r="3.2" fill="#f1d9d2" stroke="#a84a3a" stroke-width="0.9" fill-opacity="1"/>
<ellipse cx="30.2" cy="307.6" rx="3.2" ry="1.2" fill="none" stroke="#4a8a4a" stroke-width="0.6" fill-opacity="1"/>
<ellipse cx="30.2" cy="307.6" rx="1.2" ry="3.2" fill="none" stroke="#3f62ae" stroke-width="0.6" fill-opacity="1"/>
<rect x="27.0" y="315.0" width="2.6" height="2.6" fill="#9a9aa6" rx="0" fill-opacity="1"/>
<rect x="30.6" y="316.4" width="2.8" height="4.6" fill="#b4b4c0" rx="0" fill-opacity="1"/>
<path d="M28.2,321 l1.2,-2 l1,2z" fill="#777" opacity="1"/>
<line x1="25.8" y1="325.6" x2="35.2" y2="325.6" stroke="#c5c2b2" stroke-width="0.6" stroke-opacity="1"/>
<line x1="25.8" y1="326.2" x2="35.2" y2="326.2" stroke="#fff" stroke-width="0.6" stroke-opacity="1"/>
<rect x="26.4" y="328.6" width="0.9" height="0.9" fill="#c9c6b6" rx="0" fill-opacity="1"/><rect x="28.2" y="328.6" width="0.9" height="0.9" fill="#c9c6b6" rx="0" fill-opacity="1"/><rect x="30.0" y="328.6" width="0.9" height="0.9" fill="#c9c6b6" rx="0" fill-opacity="1"/><rect x="31.8" y="328.6" width="0.9" height="0.9" fill="#c9c6b6" rx="0" fill-opacity="1"/><rect x="33.6" y="328.6" width="0.9" height="0.9" fill="#c9c6b6" rx="0" fill-opacity="1"/>
<rect x="26.8" y="333.4" width="6.8" height="5.6" fill="#fff" stroke="#222" stroke-width="0.8" rx="0" fill-opacity="1"/>
<text x="30.2" y="339.6" font-family="Liberation Sans, sans-serif" font-size="6" font-weight="bold" font-style="normal" fill="#222" text-anchor="middle">A</text>
<line x1="26.4" y1="340.4" x2="34.0" y2="340.4" stroke="#222" stroke-width="0.8" stroke-opacity="1"/>
<line x1="25.8" y1="343.0" x2="35.2" y2="343.0" stroke="#c5c2b2" stroke-width="0.6" stroke-opacity="1"/>
<line x1="25.8" y1="343.6" x2="35.2" y2="343.6" stroke="#fff" stroke-width="0.6" stroke-opacity="1"/>
<path d="M27.0,349.20000000000005 l2,-1.8 h4.4 l-2,1.8z M27.0,349.20000000000005 h4.4 v4.6 h-4.4z M31.4,353.8 l2,-1.8 v-4.6" fill="none" stroke="#222" stroke-width="0.7" stroke-linecap="butt" stroke-linejoin="round" opacity="1"/>
<path d="M30.2,357.0 l3.2,1.6 v3.8 l-3.2,2 l-3.2,-2 v-3.8z M27.0,358.6 l3.2,1.8 l3.2,-1.8 M30.2,360.40000000000003 v4" fill="none" stroke="#222" stroke-width="0.7" stroke-linecap="butt" stroke-linejoin="round" opacity="1"/>
<circle cx="30.2" cy="371.0" r="3.3" fill="url(#gsph)" stroke="#2d4a8a" stroke-width="0.4" fill-opacity="1"/>
<circle cx="30.2" cy="381.0" r="3.3" fill="url(#gsph2)" stroke="#6a3a7a" stroke-width="0.4" fill-opacity="1"/>
<line x1="25.8" y1="387.4" x2="35.2" y2="387.4" stroke="#c5c2b2" stroke-width="0.6" stroke-opacity="1"/>
<line x1="25.8" y1="388.0" x2="35.2" y2="388.0" stroke="#fff" stroke-width="0.6" stroke-opacity="1"/>
<circle cx="29.4" cy="394.0" r="2.8" fill="#a9c3ea" stroke="#3f62ae" stroke-width="0.6" fill-opacity="1"/>
<rect x="29.6" y="394.2" width="4.0" height="3.6" fill="#7f9bd0" stroke="#2d4a8a" stroke-width="0.5" rx="0" fill-opacity="1"/>
<rect x="39.4" y="440.6" width="5.8" height="6.0" fill="#f3f1e6" stroke="#cfccbc" stroke-width="0.4" rx="0" fill-opacity="1"/>
<path d="M43.3,442 l-2,1.6 l2,1.6z" fill="#a9a696" opacity="1"/>
<line x1="40.9" y1="442.0" x2="40.9" y2="445.2" stroke="#a9a696" stroke-width="0.6" stroke-opacity="1"/>
<rect x="45.8" y="440.6" width="5.8" height="6.0" fill="#f3f1e6" stroke="#cfccbc" stroke-width="0.4" rx="0" fill-opacity="1"/>
<path d="M49.699999999999996,442 l-2,1.6 l2,1.6z" fill="#a9a696" opacity="1"/>
<rect x="52.2" y="440.6" width="5.8" height="6.0" fill="#f3f1e6" stroke="#cfccbc" stroke-width="0.4" rx="0" fill-opacity="1"/>
<path d="M54.1,442 l2,1.6 l-2,1.6z" fill="#a9a696" opacity="1"/>
<rect x="58.6" y="440.6" width="5.8" height="6.0" fill="#f3f1e6" stroke="#cfccbc" stroke-width="0.4" rx="0" fill-opacity="1"/>
<path d="M60.5,442 l2,1.6 l-2,1.6z" fill="#a9a696" opacity="1"/>
<line x1="62.9" y1="442.0" x2="62.9" y2="445.2" stroke="#a9a696" stroke-width="0.6" stroke-opacity="1"/>
<path d="M65.4,439.4 h27 l-3.2,7.6 h-20.6z" fill="#000" opacity="1"/>
<text x="78.2" y="445.6" font-family="Liberation Sans, sans-serif" font-size="5.3" font-weight="normal" font-style="normal" fill="#fff" text-anchor="middle">Model</text>
<path d="M92.4,439.8 l-3.2,7.2 h24.6 l3.2,-7.2" fill="#f4f2e8" stroke="#555" stroke-width="0.5" stroke-linecap="butt" stroke-linejoin="round" opacity="1"/>
<text x="101.4" y="445.6" font-family="Liberation Sans, sans-serif" font-size="5.3" font-weight="normal" font-style="normal" fill="#222" text-anchor="middle">Layout1</text>
<path d="M117,439.8 l-3.2,7.2 h27 l3.2,-7.2" fill="#f4f2e8" stroke="#555" stroke-width="0.5" stroke-linecap="butt" stroke-linejoin="round" opacity="1"/>
<text x="127.4" y="445.6" font-family="Liberation Sans, sans-serif" font-size="5.3" font-weight="normal" font-style="normal" fill="#222" text-anchor="middle">Layout2</text>
<rect x="2.4" y="449.6" width="61.4" height="7.6" fill="#f3f1e6" stroke="#c9c6b6" stroke-width="0.5" rx="0" fill-opacity="1"/>
<text x="4.0" y="455.6" font-family="Liberation Sans, sans-serif" font-size="4.85" font-weight="normal" font-style="normal" fill="#222" text-anchor="start">5.89, 21.10, 0.00</text>
<line x1="64.6" y1="449.6" x2="64.6" y2="457.0" stroke="#c5c2b2" stroke-width="0.6" stroke-opacity="1"/>
<rect x="66.6" y="449.6" width="16.4" height="7.6" fill="#efede2" stroke="#fbfaf6" stroke-width="0.5" rx="0" fill-opacity="1"/>
<path d="M66.6,457.2 h16.400000000000006 v-7.6" fill="none" stroke="#b9b6a6" stroke-width="0.5" stroke-linecap="butt" stroke-linejoin="round" opacity="1"/>
<text x="74.8" y="455.6" font-family="Liberation Sans, sans-serif" font-size="5.2" font-weight="normal" font-style="normal" fill="#1a1a1a" text-anchor="middle">SNAP</text>
<rect x="84.0" y="449.6" width="15.4" height="7.6" fill="#efede2" stroke="#fbfaf6" stroke-width="0.5" rx="0" fill-opacity="1"/>
<path d="M84,457.2 h15.400000000000006 v-7.6" fill="none" stroke="#b9b6a6" stroke-width="0.5" stroke-linecap="butt" stroke-linejoin="round" opacity="1"/>
<text x="91.7" y="455.6" font-family="Liberation Sans, sans-serif" font-size="5.2" font-weight="normal" font-style="normal" fill="#1a1a1a" text-anchor="middle">GRID</text>
<rect x="100.4" y="449.6" width="21.6" height="7.6" fill="#efede2" stroke="#fbfaf6" stroke-width="0.5" rx="0" fill-opacity="1"/>
<path d="M100.4,457.2 h21.599999999999994 v-7.6" fill="none" stroke="#b9b6a6" stroke-width="0.5" stroke-linecap="butt" stroke-linejoin="round" opacity="1"/>
<text x="111.2" y="455.6" font-family="Liberation Sans, sans-serif" font-size="5.2" font-weight="normal" font-style="normal" fill="#1a1a1a" text-anchor="middle">ORTHO</text>
<rect x="123.0" y="449.6" width="20.0" height="7.6" fill="#f7f6f0" stroke="#6f6c60" stroke-width="0.6" rx="0" fill-opacity="1"/>
<text x="133.0" y="455.6" font-family="Liberation Sans, sans-serif" font-size="5.2" font-weight="normal" font-style="normal" fill="#1a1a1a" text-anchor="middle">POLAR</text>
<rect x="144.0" y="449.6" width="21.4" height="7.6" fill="#f7f6f0" stroke="#6f6c60" stroke-width="0.6" rx="0" fill-opacity="1"/>
<text x="154.7" y="455.6" font-family="Liberation Sans, sans-serif" font-size="5.2" font-weight="normal" font-style="normal" fill="#1a1a1a" text-anchor="middle">OSNAP</text>
<rect x="166.4" y="449.6" width="21.6" height="7.6" fill="#f7f6f0" stroke="#6f6c60" stroke-width="0.6" rx="0" fill-opacity="1"/>
<text x="177.2" y="455.6" font-family="Liberation Sans, sans-serif" font-size="5.2" font-weight="normal" font-style="normal" fill="#1a1a1a" text-anchor="middle">OTRACK</text>
<rect x="189.0" y="449.6" width="17.4" height="7.6" fill="#f7f6f0" stroke="#6f6c60" stroke-width="0.6" rx="0" fill-opacity="1"/>
<text x="197.7" y="455.6" font-family="Liberation Sans, sans-serif" font-size="5.2" font-weight="normal" font-style="normal" fill="#1a1a1a" text-anchor="middle">DUCS</text>
<rect x="207.4" y="449.6" width="12.6" height="7.6" fill="#f7f6f0" stroke="#6f6c60" stroke-width="0.6" rx="0" fill-opacity="1"/>
<text x="213.7" y="455.6" font-family="Liberation Sans, sans-serif" font-size="5.2" font-weight="normal" font-style="normal" fill="#1a1a1a" text-anchor="middle">DYN</text>
<rect x="221.0" y="449.6" width="14.0" height="7.6" fill="#efede2" stroke="#fbfaf6" stroke-width="0.5" rx="0" fill-opacity="1"/>
<path d="M221,457.2 h14 v-7.6" fill="none" stroke="#b9b6a6" stroke-width="0.5" stroke-linecap="butt" stroke-linejoin="round" opacity="1"/>
<text x="228.0" y="455.6" font-family="Liberation Sans, sans-serif" font-size="5.2" font-weight="normal" font-style="normal" fill="#1a1a1a" text-anchor="middle">LWT</text>
<text x="476.6" y="455.6" font-family="Liberation Sans, sans-serif" font-size="5.2" font-weight="normal" font-style="normal" fill="#222" text-anchor="start">Annotation Scale:</text>
<text x="519.4" y="455.6" font-family="Liberation Sans, sans-serif" font-size="5.2" font-weight="normal" font-style="normal" fill="#222" text-anchor="start">1:1</text>
<path d="M528.6,453 h3 l-1.5,1.8z" fill="#222" opacity="1"/>
<line x1="538.0" y1="456.6" x2="543.0" y2="450.8" stroke="#7a8aa8" stroke-width="1.0" stroke-opacity="1"/>
<path d="M540.4,456.8 l1.6,-4.4 l1.6,4.4" fill="none" stroke="#5f86c9" stroke-width="0.8" stroke-linecap="butt" stroke-linejoin="round" opacity="1"/>
<circle cx="543.2" cy="451.6" r="1.2" fill="#e6d23c" fill-opacity="1"/>
<line x1="549.6" y1="456.6" x2="554.6" y2="450.8" stroke="#b9b6a8" stroke-width="1.0" stroke-opacity="1"/>
<path d="M552.0,456.8 l1.6,-4.4 l1.6,4.4" fill="none" stroke="#c5c2b4" stroke-width="0.8" stroke-linecap="butt" stroke-linejoin="round" opacity="1"/>
<circle cx="554.8" cy="451.6" r="1.2" fill="#d5d2c2" fill-opacity="1"/>
<rect x="560.2" y="453.0" width="6.4" height="4.4" fill="#8a8f9e" stroke="#3c4050" stroke-width="0.6" rx="0.6" fill-opacity="1"/>
<path d="M561.4,453 v-1 a2,2 0 0 1 4,0 v1" fill="none" stroke="#3c4050" stroke-width="1.0" stroke-linecap="butt" stroke-linejoin="round" opacity="1"/>
<rect x="562.0" y="454.2" width="2.8" height="2.0" fill="#d9dbe2" rx="0" fill-opacity="1"/>
<rect x="569.4" y="451.2" width="6.6" height="6.0" fill="#6f86b8" stroke="#2d3a5e" stroke-width="0.5" rx="0" fill-opacity="1"/>
<rect x="570.4" y="450.6" width="2.0" height="2.6" fill="#e6eefa" rx="0" fill-opacity="1"/>
<path d="M571.6,455.6 l1.6,1.6 l3,-3.6" fill="none" stroke="#2f9a3a" stroke-width="1.3" stroke-linecap="butt" stroke-linejoin="round" opacity="1"/>
<path d="M581.4,453.6 h3.2 l-1.6,1.8z" fill="#222" opacity="1"/>
<rect x="588.4" y="449.8" width="8.4" height="7.4" fill="#a9c0ea" stroke="#5f79b2" stroke-width="0.7" rx="0" fill-opacity="1"/>
<rect x="590.0" y="451.2" width="5.2" height="4.6" fill="#c9d9f4" stroke="#7f99cc" stroke-width="0.4" rx="0" fill-opacity="1"/>
</svg>
</body>
</html>
